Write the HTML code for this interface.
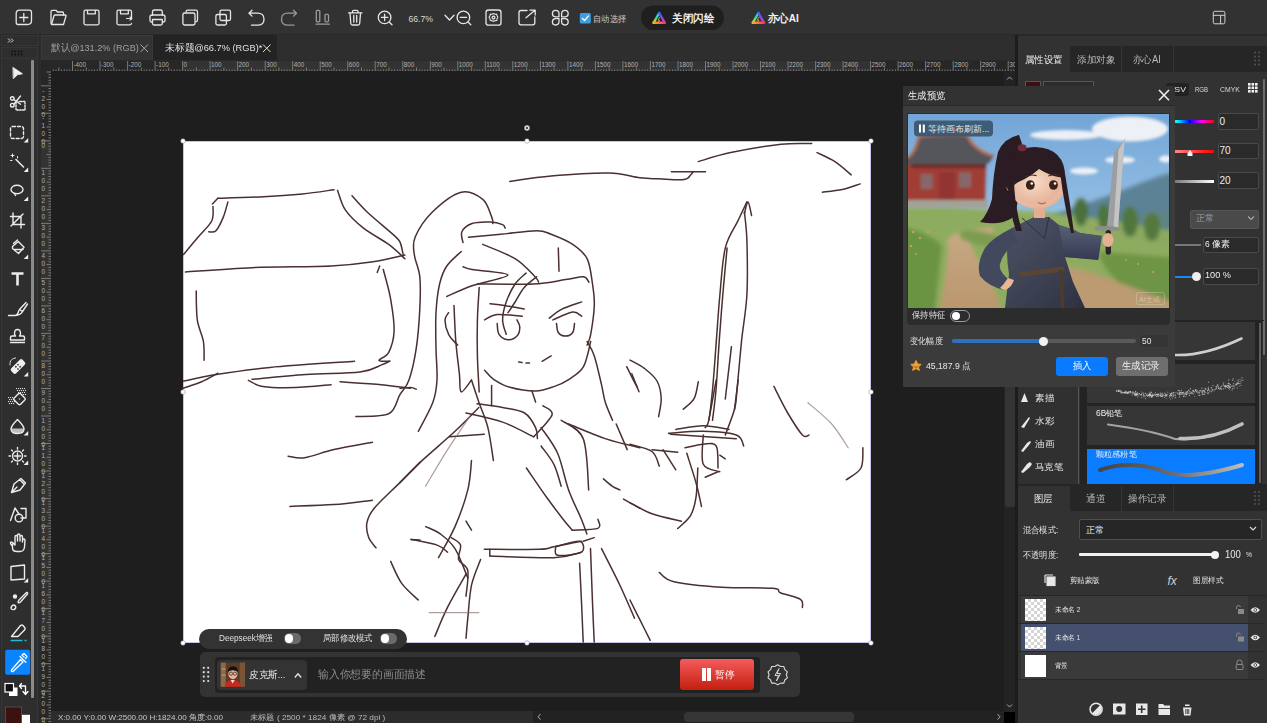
<!DOCTYPE html>
<html><head><meta charset="utf-8">
<style>
*{margin:0;padding:0;box-sizing:border-box}
html,body{width:1267px;height:723px;overflow:hidden;background:#1e1e1e;font-family:"Liberation Sans",sans-serif;color:#ddd}
.a{position:absolute}
svg{position:absolute;overflow:visible}
.t{position:absolute;white-space:nowrap;line-height:1}
</style></head><body>
<!-- TOP BAR -->
<div class="a" style="left:0;top:0;width:1267px;height:35px;background:#323232;border-bottom:1px solid #282828"></div>
<svg class="a" style="left:0;top:0" width="1267" height="35"><g fill="none" stroke="#e6e6e6" stroke-width="1.3" stroke-linecap="round" stroke-linejoin="round">
<path d="M19.5 10.2H29.5Q31.5 10.2 31.5 12.5V20.5Q31.5 24.5 27.5 24.5H18Q16.2 24.5 16.2 22.5V13.5Q16.2 10.2 19.5 10.2Z"/>
<path d="M23.8 13.5V21.5M19.8 17.5H27.8"/>
<path d="M51 23.5V11.5Q51 10.3 52.2 10.3H56L57.5 12H62.5Q63.5 12 63.5 13V15"/>
<path d="M51.5 24.5L54 15.8Q54.3 15 55.2 15H65.2Q66.3 15 66 16L63.5 24.5Z"/>
<path d="M85.5 10.2H97.5Q99 10.2 99 11.7V23.3Q99 24.8 97.5 24.8H85.5Q84 24.8 84 23.3V11.7Q84 10.2 85.5 10.2Z"/>
<path d="M87.5 10.5V13.8H95.3V10.5"/>
<path d="M131.5 19V11.7Q131.5 10.2 130 10.2H118.5Q117 10.2 117 11.7V23.3Q117 24.8 118.5 24.8H130Q131.5 24.8 131.5 23.3"/>
<path d="M120.5 10.5V13.8H128.3V10.5"/>
<path d="M126.5 18.5H131.8M130 16.8L131.8 18.5L130 20.2" stroke-width="1.1"/>
<path d="M152.5 15V11.8Q152.5 10 154.3 10H160.5Q162.3 10 162.3 11.8V15"/>
<path d="M152.5 22H151.5Q150 22 150 20.5V17Q150 15 152 15H163Q165 15 165 17V20.5Q165 22 163.5 22H162.5"/>
<path d="M152.5 19.5H162.3V23.5Q162.3 25 160.8 25H154Q152.5 25 152.5 23.5Z"/>
<path d="M186 12Q186 10.2 187.8 10.2H195.7Q197.5 10.2 197.5 12V20Q197.5 21.8 195.7 21.8"/>
<path d="M184.7 13H193.2Q195 13 195 14.8V23.2Q195 25 193.2 25H184.7Q182.9 25 182.9 23.2V14.8Q182.9 13 184.7 13Z"/>
<path d="M221.5 10.2H229Q230.5 10.2 230.5 11.7V19Q230.5 20.5 229 20.5H221.5Q220 20.5 220 19V11.7Q220 10.2 221.5 10.2Z"/>
<path d="M217.4 14.5H224.9Q226.4 14.5 226.4 16V23.5Q226.4 25 224.9 25H217.4Q215.9 25 215.9 23.5V16Q215.9 14.5 217.4 14.5Z"/>
<path d="M252 10.3L249 13.2L252 16.1M249.2 13.2H257.5Q264 13.2 264 19.2Q264 25.2 257.5 25.2H251.5"/>
</g>
<g fill="none" stroke="#9a9a9a" stroke-width="1.3" stroke-linecap="round" stroke-linejoin="round">
<path d="M293.5 10.3L296.5 13.2L293.5 16.1M296.3 13.2H288Q281.5 13.2 281.5 19.2Q281.5 25.2 288 25.2H294"/>
<rect x="316.3" y="10.3" width="3.5" height="11.5" rx="1"/>
<rect x="325" y="14.3" width="3.5" height="7.5" rx="1"/>
<path d="M316 24.2H329.3"/>
</g>
<g fill="none" stroke="#e6e6e6" stroke-width="1.3" stroke-linecap="round" stroke-linejoin="round">
<path d="M348.5 12.8H362M352.5 12.5V11.5Q352.5 10.3 353.7 10.3H356.8Q358 10.3 358 11.5V12.5"/>
<path d="M350 13.2L350.8 23.5Q351 25 352.5 25H358Q359.5 25 359.7 23.5L360.5 13.2"/>
<path d="M353.8 15.5V22.2M356.7 15.5V22.2"/>
<circle cx="384.6" cy="17.4" r="6.3"/>
<path d="M384.6 14.2V20.6M381.4 17.4H387.8M389.2 22L392 24.8"/>
</g>
<text x="408.4" y="21.8" font-family="Liberation Sans" font-size="9" textLength="24.5" lengthAdjust="spacingAndGlyphs" fill="#d8d8d8">66.7%</text>
<g fill="none" stroke="#e6e6e6" stroke-width="1.3" stroke-linecap="round" stroke-linejoin="round">
<path d="M445 15.2L449.5 20L454 15.2"/>
<circle cx="463.4" cy="17.4" r="6.3"/>
<path d="M460.2 17.4H466.6M468 22L470.8 24.8"/>
<rect x="486" y="10" width="15" height="15.2" rx="2.5"/>
<circle cx="493.5" cy="17.6" r="1.4"/>
<path d="M493.5 13.5L495 14.3L496.7 14.1L497 15.8L498 17.3L497 18.8L496.8 20.5L495 20.6L493.5 21.5L492 20.6L490.2 20.5L490 18.8L489 17.3L490 15.8L490.3 14.1L492 14.3Z" stroke-width="1.1"/>
<path d="M527 10.5H521Q519 10.5 519 12.5V22.8Q519 24.8 521 24.8H532.8Q534.8 24.8 534.8 22.8V17"/>
<path d="M526 17.8L535 10.3M530 10.2H535.2V15"/>
<path d="M559 16.8H555.4Q552.4 16.8 552.4 13.6Q552.4 10.4 555.6 10.4Q559 10.4 559 13.8Z"/>
<path d="M561.6 16.8H565.2Q568.2 16.8 568.2 13.6Q568.2 10.4 565 10.4Q561.6 10.4 561.6 13.8Z"/>
<path d="M559 18.6H555.4Q552.4 18.6 552.4 21.8Q552.4 25 555.6 25Q559 25 559 21.6Z"/>
<path d="M561.6 18.6H565.2Q568.2 18.6 568.2 21.8Q568.2 25 565 25Q561.6 25 561.6 21.6Z"/>
</g>
<rect x="579.8" y="13" width="11" height="10.5" rx="1.5" fill="#3f9ee0"/>
<path d="M582.2 18.3L584.6 20.5L588.5 15.8" fill="none" stroke="#fff" stroke-width="1.2" stroke-linecap="round" stroke-linejoin="round"/>
<text x="593.2" y="21.6" font-family="Liberation Sans" font-size="8.5" textLength="33.2" lengthAdjust="spacingAndGlyphs" fill="#c8c8c8">自动选择</text>
<rect x="641" y="5.4" width="83" height="24.6" rx="12.3" fill="#1f1f1f"/>
<defs>
<linearGradient id="lg1" x1="0" y1="0" x2="1" y2="1">
<stop offset="0" stop-color="#2bd4ff"/><stop offset="0.35" stop-color="#7a5cff"/><stop offset="0.65" stop-color="#ff3dd0"/><stop offset="1" stop-color="#ffb020"/></linearGradient>
</defs>

<defs>
<linearGradient id="lgL" x1="0" y1="0" x2="0" y2="1"><stop offset="0" stop-color="#20c8ff"/><stop offset="0.5" stop-color="#30e090"/><stop offset="1" stop-color="#ffd020"/></linearGradient>
<linearGradient id="lgR" x1="0" y1="0" x2="0" y2="1"><stop offset="0" stop-color="#4060ff"/><stop offset="1" stop-color="#e030d0"/></linearGradient>
<linearGradient id="lgB" gradientUnits="userSpaceOnUse" x1="653" y1="0" x2="665" y2="0"><stop offset="0" stop-color="#ffb020"/><stop offset="1" stop-color="#ff3060"/></linearGradient>
</defs><g transform="translate(0 0)">
<path d="M659.2 13L653.6 22.8" stroke="url(#lgL)" stroke-width="2.4" stroke-linecap="round" fill="none"/>
<path d="M659.2 13L664.8 22.8" stroke="url(#lgR)" stroke-width="2.4" stroke-linecap="round" fill="none"/>
<path d="M653.6 22.8H664.8" stroke="url(#lgB)" stroke-width="2.4" stroke-linecap="round" fill="none"/>
<path d="M659.8 17L658 20.2H659.6L658.6 22" stroke="#ffcf40" stroke-width="0.7" fill="none"/>
</g><g transform="translate(99.2 0)">
<path d="M659.2 13L653.6 22.8" stroke="url(#lgL)" stroke-width="2.4" stroke-linecap="round" fill="none"/>
<path d="M659.2 13L664.8 22.8" stroke="url(#lgR)" stroke-width="2.4" stroke-linecap="round" fill="none"/>
<path d="M653.6 22.8H664.8" stroke="url(#lgB)" stroke-width="2.4" stroke-linecap="round" fill="none"/>
<path d="M659.8 17L658 20.2H659.6L658.6 22" stroke="#ffcf40" stroke-width="0.7" fill="none"/>
</g>
<text x="672" y="22.3" font-family="Liberation Sans" font-size="10.6" font-weight="bold" textLength="42.2" lengthAdjust="spacingAndGlyphs" fill="#f2f2f2">关闭闪绘</text>

<text x="768" y="22.3" font-family="Liberation Sans" font-size="10.6" font-weight="bold" textLength="30.8" lengthAdjust="spacingAndGlyphs" fill="#f2f2f2">亦心AI</text>
<g fill="none" stroke="#d0d0d0" stroke-width="1">
<rect x="1213.3" y="11.3" width="11.6" height="12.5" rx="1.5"/>
<path d="M1213.3 15.3H1224.9M1220.6 15.3V23.8"/>
</g>
</svg>

<!-- LEFT TOOLBAR -->
<div class="a" style="left:0;top:35px;width:41px;height:688px;background:#2b2b2b"></div>
<div class="a" style="left:1px;top:35px;width:38px;height:11px;background:#2e2e2e;border:1px solid #363636"></div>
<div class="a" style="left:1px;top:47px;width:37px;height:12px;background:#2e2e2e;border:1px solid #363636"></div>
<div class="a" style="left:1px;top:59px;width:37px;height:664px;background:#2e2e2e;border-left:1px solid #363636;border-right:1px solid #363636"></div>
<div class="a" style="left:31px;top:60px;width:2.5px;height:638px;background:#8a8a8a;border-radius:1px"></div>

<svg class="a" style="left:0;top:0" width="41" height="723"><g fill="none" stroke="#ececec" stroke-width="1.4" stroke-linecap="round" stroke-linejoin="round">
<path d="M13.2 67.5L22.5 73.8L17.5 74.8L13.5 78.5Z" fill="#f0f0f0" stroke-width="0.8"/>
<circle cx="12.3" cy="98.5" r="1.8"/><circle cx="12.3" cy="105.2" r="1.8"/>
<path d="M13.8 99.5L20.5 104.2M13.8 104.2L20.5 96"/>
<path d="M16 102.5V110H25V101.5H19" stroke-dasharray="1.5 1.3"/>
<rect x="10.5" y="126.5" width="13" height="12" rx="2" stroke-dasharray="3 2"/>
<path d="M16 159.5L23.5 167" stroke-width="1.6"/>
<path d="M12.5 154V157M11 155.5H14M17.5 156.5V158M10.5 160.5H12" stroke-width="1"/>
<ellipse cx="17" cy="189.5" rx="6" ry="4.3"/>
<path d="M14 193L15.5 195.5"/>
<path d="M13 213V224.5H24.5M10.5 216.5H21V228M23 214L11 226" />
<path d="M12.5 246.5L18.3 241.5L24 247.2L18.5 253.5L12.5 248.5Z"/>
<path d="M13.5 243.5L17.5 240"/>
<path d="M14.5 249.5H23" stroke-dasharray="1 1"/>
<path d="M11.5 273.5H23.5M17.5 273.5V285.5" stroke-width="2.6" stroke-linecap="butt"/>
<path d="M8.5 315.5H15M15 315.5Q17.5 315.5 18.5 311.5L19.5 309.5L22.5 311.5Q21 315 15 315.5M19.5 309.5L26 302.5M22.5 311.5L27.5 304"/>
<path d="M14.5 333.5Q14.5 329.5 17.5 329.5Q20.5 329.5 20.5 333.5Q20.5 335 19.5 336H23Q24.5 336 24.5 337.5V340H10.5V337.5Q10.5 336 12 336H15.5Q14.5 335 14.5 333.5Z"/>
<path d="M10.5 342.5H24.5"/>
<rect x="10" y="363" width="16" height="7" rx="2" transform="rotate(-45 18 366.5)" fill="#f0f0f0" stroke="none"/>
<g fill="#2b2b2b" stroke="none" transform="rotate(-45 18 366.5)"><rect x="15.5" y="364.5" width="1.5" height="1.5"/><rect x="18.5" y="364.5" width="1.5" height="1.5"/><rect x="15.5" y="367.5" width="1.5" height="1.5"/><rect x="18.5" y="367.5" width="1.5" height="1.5"/></g>
<path d="M10 365Q9.5 359 15.5 358" stroke-dasharray="1.2 1" stroke-width="1"/>
<g fill="#dcdcdc" stroke="none"><rect x="16" y="388" width="1.1" height="1.1"/><rect x="18" y="388" width="1.1" height="1.1"/><rect x="20" y="388" width="1.1" height="1.1"/><rect x="22" y="388" width="1.1" height="1.1"/><rect x="24" y="388" width="1.1" height="1.1"/><rect x="17" y="390" width="1.1" height="1.1"/><rect x="19" y="390" width="1.1" height="1.1"/><rect x="21" y="390" width="1.1" height="1.1"/><rect x="23" y="390" width="1.1" height="1.1"/><rect x="25" y="390" width="1.1" height="1.1"/><rect x="18" y="392" width="1.1" height="1.1"/><rect x="20" y="392" width="1.1" height="1.1"/><rect x="22" y="392" width="1.1" height="1.1"/><rect x="24" y="392" width="1.1" height="1.1"/><rect x="23" y="394" width="1.1" height="1.1"/><rect x="25" y="394" width="1.1" height="1.1"/><rect x="8" y="397" width="1.1" height="1.1"/><rect x="10" y="397" width="1.1" height="1.1"/><rect x="12" y="397" width="1.1" height="1.1"/><rect x="9" y="399" width="1.1" height="1.1"/><rect x="11" y="399" width="1.1" height="1.1"/><rect x="13" y="399" width="1.1" height="1.1"/><rect x="8" y="401" width="1.1" height="1.1"/><rect x="10" y="401" width="1.1" height="1.1"/><rect x="12" y="401" width="1.1" height="1.1"/><rect x="14" y="401" width="1.1" height="1.1"/><rect x="9" y="403" width="1.1" height="1.1"/><rect x="11" y="403" width="1.1" height="1.1"/><rect x="13" y="403" width="1.1" height="1.1"/></g>
<rect x="15" y="394.5" width="9" height="9" rx="1.5" transform="rotate(45 19.5 399)" fill="#2e2e2e"/>
<path d="M19.5 399L19.5 399"/>
<path d="M11.3 428.5Q11 432.5 17.5 433.5Q24 432.5 23.7 428.5Z" fill="#bdbdbd" stroke="none"/>
<path d="M17.5 419.5Q24 426 24 429Q24 433.5 17.5 433.5Q11 433.5 11 429Q11 426 17.5 419.5Z"/>
<circle cx="17.5" cy="456" r="5"/>
<path d="M17.5 453V459M14.5 456H20.5M17.5 447.5V449M17.5 463V464.5M9 456H10.5M24.5 456H26M11.5 450L12.5 451M22.5 461L23.5 462M23.5 450L22.5 451M11.5 462L12.5 461"/>
<path d="M11.5 492.5L14 484L21 478.5L25.5 483L20 490Z M11.5 492.5L17 487 M19.5 479.5L24 484"/>
<path d="M10.5 520.5L15 508L19 514M21 508.5H26V518H21"/>
<circle cx="19" cy="518" r="3.8"/>
<path d="M12.5 544V548Q12.5 551.5 17 551.5H20Q24 551.5 24.5 547L25 540.5Q25 539 23.8 539Q22.5 539 22.5 540.5V542V537Q22.5 535.5 21.2 535.5Q20 535.5 20 537V541V535.5Q20 534 18.7 534Q17.5 534 17.5 535.5V541V537Q17.5 535.5 16.2 535.5Q15 535.5 15 537V545L12.5 542.5Q11 541.5 10.5 542.5Q10 543.5 12.5 546"/>
<path d="M11 566.5L24.5 565V579L11 580Z"/>
<path d="M19 600L26.5 592.5Q28 592 27.5 594L20.5 602Q18.5 603.5 18 602Z"/>
<path d="M12 606Q13.5 604 15.5 606Q16.5 608.5 14 609.5Q11 610 11 607.5Z"/>
<circle cx="15" cy="596.5" r="1.5" fill="#ececec"/>
<path d="M11.5 636.5L20.5 625.5Q22 624.5 23 625.5L25 628Q25.5 629 24.5 630L18 636.5Z M11.5 636.5H18"/>
</g>
<path d="M10.5 640.5H22.5M24.5 640.5H26.5" stroke="#21b8d8" stroke-width="1.6"/>
<g fill="#f0f0f0">
<path d="M28.2 138V142.5H23.7Z"/>
<path d="M28.2 167.5V172H23.7Z"/>
<path d="M28.2 196.5V201H23.7Z"/>
<path d="M28.2 254.5V259H23.7Z"/>
<path d="M28.2 372V376.5H23.7Z"/>
<path d="M28.2 431V435.5H23.7Z"/>
<path d="M28.2 460.5V465H23.7Z"/>
<path d="M28.2 578V582.5H23.7Z"/>
</g>
<rect x="5.2" y="649.8" width="25" height="25" rx="2" fill="#0a84ff"/>
<g fill="none" stroke="#fff" stroke-width="1.3" stroke-linecap="round" stroke-linejoin="round">
<path d="M11.5 670L20.5 659.5L23 662L13 671.5Q11 672 11.5 670Z"/>
<path d="M20 656.5L25.8 662.3M24 657L22 655L24 653.5L27 656.5L25.5 658.5"/>
</g>
<rect x="9" y="687.5" width="8.5" height="8.5" fill="#fff"/>
<rect x="5" y="683.5" width="8.5" height="8.5" fill="#111" stroke="#fff" stroke-width="1.2"/>
<path d="M21.5 683.5L19.5 686L21.5 688.5M19.8 686H25.5V694M23 691.5L25.5 694.5L28 691.5" fill="none" stroke="#fff" stroke-width="1.3" stroke-linecap="round" stroke-linejoin="round"/>
<rect x="21.5" y="714.8" width="8.5" height="8.5" fill="#fff"/>
<rect x="5.5" y="707" width="16" height="16.5" fill="#3a1212" stroke="#555" stroke-width="0.8"/>
<g fill="#111"><circle cx="12" cy="51.5" r="0.9"/><circle cx="15.2" cy="51.5" r="0.9"/><circle cx="18.4" cy="51.5" r="0.9"/><circle cx="21.6" cy="51.5" r="0.9"/><circle cx="12" cy="54.5" r="0.9"/><circle cx="15.2" cy="54.5" r="0.9"/><circle cx="18.4" cy="54.5" r="0.9"/><circle cx="21.6" cy="54.5" r="0.9"/></g>
<path d="M8 38.5L10 40.5L8 42.5M11 38.5L13 40.5L11 42.5" fill="none" stroke="#ddd" stroke-width="1"/>
</svg>
<!-- TABS -->
<div class="a" style="left:41px;top:35px;width:974px;height:25px;background:#2e2e2e"></div>
<div class="a" style="left:41px;top:35px;width:112px;height:25px;background:#333;border:1px solid #3a3a3a;border-bottom:none"></div>
<div class="a" style="left:153px;top:35px;width:124px;height:25px;background:#232323"></div>
<div class="t" style="left:51px;top:42.5px;font-size:9.5px;color:#a0a0a0;transform:scaleX(0.960);transform-origin:0 0">默认@131.2% (RGB)</div>
<div class="t" style="left:165px;top:42.5px;font-size:9.5px;color:#e0e0e0;transform:scaleX(0.975);transform-origin:0 0">未标题@66.7% (RGB)*</div>
<svg class="a" style="left:0;top:0" width="300" height="60"><path d="M140.5 44.5L148 52M148 44.5L140.5 52" stroke="#a8a8a8" stroke-width="1"/><path d="M263 44.5L270.5 52M270.5 44.5L263 52" stroke="#e0e0e0" stroke-width="1"/></svg>

<!-- RULERS -->
<div class="a" style="left:41px;top:60px;width:974px;height:11px;background:#2a2a2a"></div>
<div class="a" style="left:41px;top:71px;width:10px;height:652px;background:#2a2a2a"></div>
<div class="a" style="left:42px;top:61px;width:9px;height:10px;background:#262626;border:1px solid #363636"></div>
<svg id="rulers" class="a" style="left:0;top:0" width="1267" height="723"><defs><clipPath id="rclip"><rect x="41" y="60" width="974" height="663"/></clipPath></defs><g clip-path="url(#rclip)"><rect x="41" y="61" width="974" height="10" fill="#272727"/><rect x="182.6" y="61" width="688.0" height="10" fill="#333"/><rect x="41" y="71" width="10" height="652" fill="#272727"/><rect x="41" y="141" width="10" height="502.0" fill="#333"/><path d="M53.3 69.5V71M56.0 69.5V71M58.8 67.5V71M61.5 69.5V71M64.3 69.5V71M67.0 69.5V71M69.8 69.5V71M72.5 61V71M75.3 69.5V71M78.0 69.5V71M80.8 69.5V71M83.5 69.5V71M86.3 67.5V71M89.0 69.5V71M91.8 69.5V71M94.5 69.5V71M97.3 69.5V71M100.0 61V71M102.8 69.5V71M105.5 69.5V71M108.3 69.5V71M111.0 69.5V71M113.8 67.5V71M116.6 69.5V71M119.3 69.5V71M122.1 69.5V71M124.8 69.5V71M127.6 61V71M130.3 69.5V71M133.1 69.5V71M135.8 69.5V71M138.6 69.5V71M141.3 67.5V71M144.1 69.5V71M146.8 69.5V71M149.6 69.5V71M152.3 69.5V71M155.1 61V71M157.8 69.5V71M160.6 69.5V71M163.3 69.5V71M166.1 69.5V71M168.8 67.5V71M171.6 69.5V71M174.3 69.5V71M177.1 69.5V71M179.8 69.5V71M182.6 61V71M185.4 69.5V71M188.1 69.5V71M190.9 69.5V71M193.6 69.5V71M196.4 67.5V71M199.1 69.5V71M201.9 69.5V71M204.6 69.5V71M207.4 69.5V71M210.1 61V71M212.9 69.5V71M215.6 69.5V71M218.4 69.5V71M221.1 69.5V71M223.9 67.5V71M226.6 69.5V71M229.4 69.5V71M232.1 69.5V71M234.9 69.5V71M237.6 61V71M240.4 69.5V71M243.1 69.5V71M245.9 69.5V71M248.6 69.5V71M251.4 67.5V71M254.2 69.5V71M256.9 69.5V71M259.7 69.5V71M262.4 69.5V71M265.2 61V71M267.9 69.5V71M270.7 69.5V71M273.4 69.5V71M276.2 69.5V71M278.9 67.5V71M281.7 69.5V71M284.4 69.5V71M287.2 69.5V71M289.9 69.5V71M292.7 61V71M295.4 69.5V71M298.2 69.5V71M300.9 69.5V71M303.7 69.5V71M306.4 67.5V71M309.2 69.5V71M311.9 69.5V71M314.7 69.5V71M317.4 69.5V71M320.2 61V71M323.0 69.5V71M325.7 69.5V71M328.5 69.5V71M331.2 69.5V71M334.0 67.5V71M336.7 69.5V71M339.5 69.5V71M342.2 69.5V71M345.0 69.5V71M347.7 61V71M350.5 69.5V71M353.2 69.5V71M356.0 69.5V71M358.7 69.5V71M361.5 67.5V71M364.2 69.5V71M367.0 69.5V71M369.7 69.5V71M372.5 69.5V71M375.2 61V71M378.0 69.5V71M380.7 69.5V71M383.5 69.5V71M386.2 69.5V71M389.0 67.5V71M391.8 69.5V71M394.5 69.5V71M397.3 69.5V71M400.0 69.5V71M402.8 61V71M405.5 69.5V71M408.3 69.5V71M411.0 69.5V71M413.8 69.5V71M416.5 67.5V71M419.3 69.5V71M422.0 69.5V71M424.8 69.5V71M427.5 69.5V71M430.3 61V71M433.0 69.5V71M435.8 69.5V71M438.5 69.5V71M441.3 69.5V71M444.0 67.5V71M446.8 69.5V71M449.5 69.5V71M452.3 69.5V71M455.0 69.5V71M457.8 61V71M460.6 69.5V71M463.3 69.5V71M466.1 69.5V71M468.8 69.5V71M471.6 67.5V71M474.3 69.5V71M477.1 69.5V71M479.8 69.5V71M482.6 69.5V71M485.3 61V71M488.1 69.5V71M490.8 69.5V71M493.6 69.5V71M496.3 69.5V71M499.1 67.5V71M501.8 69.5V71M504.6 69.5V71M507.3 69.5V71M510.1 69.5V71M512.8 61V71M515.6 69.5V71M518.3 69.5V71M521.1 69.5V71M523.8 69.5V71M526.6 67.5V71M529.4 69.5V71M532.1 69.5V71M534.9 69.5V71M537.6 69.5V71M540.4 61V71M543.1 69.5V71M545.9 69.5V71M548.6 69.5V71M551.4 69.5V71M554.1 67.5V71M556.9 69.5V71M559.6 69.5V71M562.4 69.5V71M565.1 69.5V71M567.9 61V71M570.6 69.5V71M573.4 69.5V71M576.1 69.5V71M578.9 69.5V71M581.6 67.5V71M584.4 69.5V71M587.1 69.5V71M589.9 69.5V71M592.6 69.5V71M595.4 61V71M598.2 69.5V71M600.9 69.5V71M603.7 69.5V71M606.4 69.5V71M609.2 67.5V71M611.9 69.5V71M614.7 69.5V71M617.4 69.5V71M620.2 69.5V71M622.9 61V71M625.7 69.5V71M628.4 69.5V71M631.2 69.5V71M633.9 69.5V71M636.7 67.5V71M639.4 69.5V71M642.2 69.5V71M644.9 69.5V71M647.7 69.5V71M650.4 61V71M653.2 69.5V71M655.9 69.5V71M658.7 69.5V71M661.4 69.5V71M664.2 67.5V71M667.0 69.5V71M669.7 69.5V71M672.5 69.5V71M675.2 69.5V71M678.0 61V71M680.7 69.5V71M683.5 69.5V71M686.2 69.5V71M689.0 69.5V71M691.7 67.5V71M694.5 69.5V71M697.2 69.5V71M700.0 69.5V71M702.7 69.5V71M705.5 61V71M708.2 69.5V71M711.0 69.5V71M713.7 69.5V71M716.5 69.5V71M719.2 67.5V71M722.0 69.5V71M724.7 69.5V71M727.5 69.5V71M730.2 69.5V71M733.0 61V71M735.8 69.5V71M738.5 69.5V71M741.3 69.5V71M744.0 69.5V71M746.8 67.5V71M749.5 69.5V71M752.3 69.5V71M755.0 69.5V71M757.8 69.5V71M760.5 61V71M763.3 69.5V71M766.0 69.5V71M768.8 69.5V71M771.5 69.5V71M774.3 67.5V71M777.0 69.5V71M779.8 69.5V71M782.5 69.5V71M785.3 69.5V71M788.0 61V71M790.8 69.5V71M793.5 69.5V71M796.3 69.5V71M799.0 69.5V71M801.8 67.5V71M804.6 69.5V71M807.3 69.5V71M810.1 69.5V71M812.8 69.5V71M815.6 61V71M818.3 69.5V71M821.1 69.5V71M823.8 69.5V71M826.6 69.5V71M829.3 67.5V71M832.1 69.5V71M834.8 69.5V71M837.6 69.5V71M840.3 69.5V71M843.1 61V71M845.8 69.5V71M848.6 69.5V71M851.3 69.5V71M854.1 69.5V71M856.8 67.5V71M859.6 69.5V71M862.3 69.5V71M865.1 69.5V71M867.8 69.5V71M870.6 61V71M873.4 69.5V71M876.1 69.5V71M878.9 69.5V71M881.6 69.5V71M884.4 67.5V71M887.1 69.5V71M889.9 69.5V71M892.6 69.5V71M895.4 69.5V71M898.1 61V71M900.9 69.5V71M903.6 69.5V71M906.4 69.5V71M909.1 69.5V71M911.9 67.5V71M914.6 69.5V71M917.4 69.5V71M920.1 69.5V71M922.9 69.5V71M925.6 61V71M928.4 69.5V71M931.1 69.5V71M933.9 69.5V71M936.6 69.5V71M939.4 67.5V71M942.2 69.5V71M944.9 69.5V71M947.7 69.5V71M950.4 69.5V71M953.2 61V71M955.9 69.5V71M958.7 69.5V71M961.4 69.5V71M964.2 69.5V71M966.9 67.5V71M969.7 69.5V71M972.4 69.5V71M975.2 69.5V71M977.9 69.5V71M980.7 61V71M983.4 69.5V71M986.2 69.5V71M988.9 69.5V71M991.7 69.5V71M994.4 67.5V71M997.2 69.5V71M999.9 69.5V71M1002.7 69.5V71M1005.4 69.5V71M1008.2 61V71M1011.0 69.5V71M1013.7 69.5V71M46.5 72.0H51M48.5 74.8H51M48.5 77.5H51M48.5 80.3H51M48.5 83.0H51M41 85.8H51M48.5 88.5H51M48.5 91.3H51M48.5 94.0H51M48.5 96.8H51M46.5 99.5H51M48.5 102.3H51M48.5 105.0H51M48.5 107.8H51M48.5 110.5H51M41 113.3H51M48.5 116.0H51M48.5 118.8H51M48.5 121.5H51M48.5 124.3H51M46.5 127.0H51M48.5 129.8H51M48.5 132.5H51M48.5 135.3H51M48.5 138.0H51M41 140.8H51M48.5 143.6H51M48.5 146.3H51M48.5 149.1H51M48.5 151.8H51M46.5 154.6H51M48.5 157.3H51M48.5 160.1H51M48.5 162.8H51M48.5 165.6H51M41 168.3H51M48.5 171.1H51M48.5 173.8H51M48.5 176.6H51M48.5 179.3H51M46.5 182.1H51M48.5 184.8H51M48.5 187.6H51M48.5 190.3H51M48.5 193.1H51M41 195.8H51M48.5 198.6H51M48.5 201.3H51M48.5 204.1H51M48.5 206.8H51M46.5 209.6H51M48.5 212.4H51M48.5 215.1H51M48.5 217.9H51M48.5 220.6H51M41 223.4H51M48.5 226.1H51M48.5 228.9H51M48.5 231.6H51M48.5 234.4H51M46.5 237.1H51M48.5 239.9H51M48.5 242.6H51M48.5 245.4H51M48.5 248.1H51M41 250.9H51M48.5 253.6H51M48.5 256.4H51M48.5 259.1H51M48.5 261.9H51M46.5 264.6H51M48.5 267.4H51M48.5 270.1H51M48.5 272.9H51M48.5 275.6H51M41 278.4H51M48.5 281.2H51M48.5 283.9H51M48.5 286.7H51M48.5 289.4H51M46.5 292.2H51M48.5 294.9H51M48.5 297.7H51M48.5 300.4H51M48.5 303.2H51M41 305.9H51M48.5 308.7H51M48.5 311.4H51M48.5 314.2H51M48.5 316.9H51M46.5 319.7H51M48.5 322.4H51M48.5 325.2H51M48.5 327.9H51M48.5 330.7H51M41 333.4H51M48.5 336.2H51M48.5 338.9H51M48.5 341.7H51M48.5 344.4H51M46.5 347.2H51M48.5 350.0H51M48.5 352.7H51M48.5 355.5H51M48.5 358.2H51M41 361.0H51M48.5 363.7H51M48.5 366.5H51M48.5 369.2H51M48.5 372.0H51M46.5 374.7H51M48.5 377.5H51M48.5 380.2H51M48.5 383.0H51M48.5 385.7H51M41 388.5H51M48.5 391.2H51M48.5 394.0H51M48.5 396.7H51M48.5 399.5H51M46.5 402.2H51M48.5 405.0H51M48.5 407.7H51M48.5 410.5H51M48.5 413.2H51M41 416.0H51M48.5 418.8H51M48.5 421.5H51M48.5 424.3H51M48.5 427.0H51M46.5 429.8H51M48.5 432.5H51M48.5 435.3H51M48.5 438.0H51M48.5 440.8H51M41 443.5H51M48.5 446.3H51M48.5 449.0H51M48.5 451.8H51M48.5 454.5H51M46.5 457.3H51M48.5 460.0H51M48.5 462.8H51M48.5 465.5H51M48.5 468.3H51M41 471.0H51M48.5 473.8H51M48.5 476.5H51M48.5 479.3H51M48.5 482.0H51M46.5 484.8H51M48.5 487.6H51M48.5 490.3H51M48.5 493.1H51M48.5 495.8H51M41 498.6H51M48.5 501.3H51M48.5 504.1H51M48.5 506.8H51M48.5 509.6H51M46.5 512.3H51M48.5 515.1H51M48.5 517.8H51M48.5 520.6H51M48.5 523.3H51M41 526.1H51M48.5 528.8H51M48.5 531.6H51M48.5 534.3H51M48.5 537.1H51M46.5 539.8H51M48.5 542.6H51M48.5 545.3H51M48.5 548.1H51M48.5 550.8H51M41 553.6H51M48.5 556.4H51M48.5 559.1H51M48.5 561.9H51M48.5 564.6H51M46.5 567.4H51M48.5 570.1H51M48.5 572.9H51M48.5 575.6H51M48.5 578.4H51M41 581.1H51M48.5 583.9H51M48.5 586.6H51M48.5 589.4H51M48.5 592.1H51M46.5 594.9H51M48.5 597.6H51M48.5 600.4H51M48.5 603.1H51M48.5 605.9H51M41 608.6H51M48.5 611.4H51M48.5 614.1H51M48.5 616.9H51M48.5 619.6H51M46.5 622.4H51M48.5 625.2H51M48.5 627.9H51M48.5 630.7H51M48.5 633.4H51M41 636.2H51M48.5 638.9H51M48.5 641.7H51M48.5 644.4H51M48.5 647.2H51M46.5 649.9H51M48.5 652.7H51M48.5 655.4H51M48.5 658.2H51M48.5 660.9H51M41 663.7H51M48.5 666.4H51M48.5 669.2H51M48.5 671.9H51M48.5 674.7H51M46.5 677.4H51M48.5 680.2H51M48.5 682.9H51M48.5 685.7H51M48.5 688.4H51M41 691.2H51M48.5 694.0H51M48.5 696.7H51M48.5 699.5H51M48.5 702.2H51M46.5 705.0H51M48.5 707.7H51M48.5 710.5H51M48.5 713.2H51M48.5 716.0H51M41 718.7H51M48.5 721.5H51" stroke="#7a7a7a" stroke-width="1" fill="none"/><g font-family="Liberation Sans" font-size="6.3" fill="#b0b0b0"><text x="73.5" y="67.3">-400</text><text x="101.0" y="67.3">-300</text><text x="128.6" y="67.3">-200</text><text x="156.1" y="67.3">-100</text><text x="183.6" y="67.3">0</text><text x="211.1" y="67.3">100</text><text x="238.6" y="67.3">200</text><text x="266.2" y="67.3">300</text><text x="293.7" y="67.3">400</text><text x="321.2" y="67.3">500</text><text x="348.7" y="67.3">600</text><text x="376.2" y="67.3">700</text><text x="403.8" y="67.3">800</text><text x="431.3" y="67.3">900</text><text x="458.8" y="67.3">1000</text><text x="486.3" y="67.3">1100</text><text x="513.8" y="67.3">1200</text><text x="541.4" y="67.3">1300</text><text x="568.9" y="67.3">1400</text><text x="596.4" y="67.3">1500</text><text x="623.9" y="67.3">1600</text><text x="651.4" y="67.3">1700</text><text x="679.0" y="67.3">1800</text><text x="706.5" y="67.3">1900</text><text x="734.0" y="67.3">2000</text><text x="761.5" y="67.3">2100</text><text x="789.0" y="67.3">2200</text><text x="816.6" y="67.3">2300</text><text x="844.1" y="67.3">2400</text><text x="871.6" y="67.3">2500</text><text x="899.1" y="67.3">2600</text><text x="926.6" y="67.3">2700</text><text x="954.2" y="67.3">2800</text><text x="981.7" y="67.3">2900</text><text x="1009.2" y="67.3">3000</text><text x="43.3" y="92.6" text-anchor="middle">-</text><text x="43.3" y="100.6" text-anchor="middle">2</text><text x="43.3" y="108.6" text-anchor="middle">0</text><text x="43.3" y="116.6" text-anchor="middle">0</text><text x="43.3" y="120.1" text-anchor="middle">-</text><text x="43.3" y="128.1" text-anchor="middle">1</text><text x="43.3" y="136.1" text-anchor="middle">0</text><text x="43.3" y="144.1" text-anchor="middle">0</text><text x="43.3" y="147.6" text-anchor="middle">0</text><text x="43.3" y="175.1" text-anchor="middle">1</text><text x="43.3" y="183.1" text-anchor="middle">0</text><text x="43.3" y="191.1" text-anchor="middle">0</text><text x="43.3" y="202.6" text-anchor="middle">2</text><text x="43.3" y="210.6" text-anchor="middle">0</text><text x="43.3" y="218.6" text-anchor="middle">0</text><text x="43.3" y="230.2" text-anchor="middle">3</text><text x="43.3" y="238.2" text-anchor="middle">0</text><text x="43.3" y="246.2" text-anchor="middle">0</text><text x="43.3" y="257.7" text-anchor="middle">4</text><text x="43.3" y="265.7" text-anchor="middle">0</text><text x="43.3" y="273.7" text-anchor="middle">0</text><text x="43.3" y="285.2" text-anchor="middle">5</text><text x="43.3" y="293.2" text-anchor="middle">0</text><text x="43.3" y="301.2" text-anchor="middle">0</text><text x="43.3" y="312.7" text-anchor="middle">6</text><text x="43.3" y="320.7" text-anchor="middle">0</text><text x="43.3" y="328.7" text-anchor="middle">0</text><text x="43.3" y="340.2" text-anchor="middle">7</text><text x="43.3" y="348.2" text-anchor="middle">0</text><text x="43.3" y="356.2" text-anchor="middle">0</text><text x="43.3" y="367.8" text-anchor="middle">8</text><text x="43.3" y="375.8" text-anchor="middle">0</text><text x="43.3" y="383.8" text-anchor="middle">0</text><text x="43.3" y="395.3" text-anchor="middle">9</text><text x="43.3" y="403.3" text-anchor="middle">0</text><text x="43.3" y="411.3" text-anchor="middle">0</text><text x="43.3" y="422.8" text-anchor="middle">1</text><text x="43.3" y="430.8" text-anchor="middle">0</text><text x="43.3" y="438.8" text-anchor="middle">0</text><text x="43.3" y="446.8" text-anchor="middle">0</text><text x="43.3" y="450.3" text-anchor="middle">1</text><text x="43.3" y="458.3" text-anchor="middle">1</text><text x="43.3" y="466.3" text-anchor="middle">0</text><text x="43.3" y="474.3" text-anchor="middle">0</text><text x="43.3" y="477.8" text-anchor="middle">1</text><text x="43.3" y="485.8" text-anchor="middle">2</text><text x="43.3" y="493.8" text-anchor="middle">0</text><text x="43.3" y="501.8" text-anchor="middle">0</text><text x="43.3" y="505.4" text-anchor="middle">1</text><text x="43.3" y="513.4" text-anchor="middle">3</text><text x="43.3" y="521.4" text-anchor="middle">0</text><text x="43.3" y="529.4" text-anchor="middle">0</text><text x="43.3" y="532.9" text-anchor="middle">1</text><text x="43.3" y="540.9" text-anchor="middle">4</text><text x="43.3" y="548.9" text-anchor="middle">0</text><text x="43.3" y="556.9" text-anchor="middle">0</text><text x="43.3" y="560.4" text-anchor="middle">1</text><text x="43.3" y="568.4" text-anchor="middle">5</text><text x="43.3" y="576.4" text-anchor="middle">0</text><text x="43.3" y="584.4" text-anchor="middle">0</text><text x="43.3" y="587.9" text-anchor="middle">1</text><text x="43.3" y="595.9" text-anchor="middle">6</text><text x="43.3" y="603.9" text-anchor="middle">0</text><text x="43.3" y="611.9" text-anchor="middle">0</text><text x="43.3" y="615.4" text-anchor="middle">1</text><text x="43.3" y="623.4" text-anchor="middle">7</text><text x="43.3" y="631.4" text-anchor="middle">0</text><text x="43.3" y="639.4" text-anchor="middle">0</text><text x="43.3" y="643.0" text-anchor="middle">1</text><text x="43.3" y="651.0" text-anchor="middle">8</text><text x="43.3" y="659.0" text-anchor="middle">0</text><text x="43.3" y="667.0" text-anchor="middle">0</text><text x="43.3" y="670.5" text-anchor="middle">1</text><text x="43.3" y="678.5" text-anchor="middle">9</text><text x="43.3" y="686.5" text-anchor="middle">0</text><text x="43.3" y="694.5" text-anchor="middle">0</text><text x="43.3" y="698.0" text-anchor="middle">2</text><text x="43.3" y="706.0" text-anchor="middle">0</text><text x="43.3" y="714.0" text-anchor="middle">0</text><text x="43.3" y="722.0" text-anchor="middle">0</text><text x="43.3" y="725.5" text-anchor="middle">2</text><text x="43.3" y="733.5" text-anchor="middle">1</text><text x="43.3" y="741.5" text-anchor="middle">0</text><text x="43.3" y="749.5" text-anchor="middle">0</text></g></g></svg>

<!-- CANVAS AREA -->
<div class="a" style="left:51px;top:71px;width:953px;height:639px;background:#1e1e1e"></div>
<div class="a" style="left:183px;top:141px;width:688px;height:502px;background:#fff;box-shadow:inset 0 0 0 1px #c4c4ec"></div>
<svg id="sketch" class="a" style="left:0;top:0" width="1267" height="723"><g fill="none" stroke="#4a3030" stroke-width="1.5" stroke-linecap="round" stroke-linejoin="round"><path d="M217.8 198.3C224.7 198.1 245.1 197.6 259.2 196.9C273.3 196.2 289.8 195.2 302.3 194.0C314.8 192.8 328.7 190.4 334.0 189.7"/><path d="M212.4 204.0L217.8 198.3"/><path d="M183.6 254.4C186.0 251.5 193.3 242.8 198.0 237.2C202.7 231.6 209.2 226.1 211.7 221.0C214.2 215.9 212.8 209.0 213.0 206.6"/><path d="M208.8 231.8C210.0 231.6 213.6 233.1 216.0 230.7C218.4 228.3 221.2 222.2 223.2 217.4C225.2 212.6 227.1 204.5 227.9 201.9"/><path d="M337.6 190.4C338.9 193.7 341.2 203.9 345.5 210.2C349.8 216.5 356.3 222.5 363.5 228.2C370.7 233.9 381.8 239.3 388.7 244.4C395.6 249.5 402.2 256.3 404.9 258.7"/><path d="M352.0 195.8C354.5 198.5 360.1 205.4 367.1 212.0C374.1 218.6 388.6 230.3 394.1 235.4C399.6 240.5 398.7 239.4 400.2 242.6C401.7 245.8 402.6 252.4 403.1 254.4"/><path d="M185.4 272.0C196.5 271.3 227.7 268.7 252.0 267.7C276.3 266.7 310.7 267.0 331.1 266.0C351.5 265.0 362.0 263.4 374.3 261.6C386.6 259.8 399.8 256.2 404.9 255.1"/><path d="M377.2 272.4L379.7 266.0"/><path d="M196.2 291.1C196.4 295.9 196.1 311.5 197.3 319.9C198.5 328.3 202.3 334.8 203.4 341.5C204.5 348.2 204.0 357.1 204.1 360.2"/><path d="M383.3 269.5C384.5 274.3 388.7 288.1 390.5 298.3C392.3 308.5 394.4 321.7 394.1 330.7C393.8 339.7 391.2 347.4 388.7 352.3C386.2 357.2 379.0 358.7 379.0 360.2C379.0 361.7 387.1 361.1 388.7 361.3"/><path d="M183.6 381.1C189.0 380.0 201.6 376.9 216.0 374.6C230.4 372.3 246.9 369.6 270.0 367.4C293.1 365.2 340.4 362.3 354.5 361.3"/><path d="M183.0 388.3C186.1 387.2 195.8 384.3 201.6 381.8C207.4 379.3 215.1 374.6 217.8 373.2"/><path d="M248.4 380.4C250.8 381.4 255.0 385.3 262.8 386.5C270.6 387.7 283.7 387.9 295.1 387.6C306.5 387.3 325.1 385.2 331.1 384.7"/><path d="M252.0 379.3C261.0 378.5 288.0 375.8 306.0 374.6C324.0 373.4 347.4 373.7 360.0 372.1C372.6 370.5 376.5 366.8 381.5 364.9C386.5 363.0 388.6 361.6 390.0 361.0"/><path d="M340.1 381.8C347.0 382.3 369.8 383.6 381.5 384.7C393.2 385.8 405.5 387.7 410.3 388.3"/><path d="M509.8 181.4C516.7 180.5 534.6 177.4 551.1 176.0C567.6 174.6 593.9 172.8 608.7 173.1C623.5 173.4 631.6 176.9 640.0 177.8C648.4 178.8 651.5 178.5 658.8 178.8C666.1 179.1 678.6 180.4 684.0 179.6C689.4 178.8 689.7 175.5 691.2 174.2C692.7 172.9 692.7 172.1 693.0 171.7"/><path d="M671.4 171.7L705.5 171.7"/><path d="M698.3 161.6C703.7 160.1 716.9 155.5 730.7 152.6C744.5 149.7 767.6 145.8 781.1 144.3C794.6 142.8 806.6 143.7 811.7 143.6"/><path d="M817.0 152.6C820.0 154.1 829.3 157.9 835.0 161.6C840.7 165.3 848.5 172.7 851.2 174.9"/><path d="M822.4 192.2C825.7 191.8 835.9 191.0 842.2 189.6C848.5 188.2 857.2 184.8 860.2 183.9"/><path d="M492.8 223.5C492.6 222.5 493.5 221.4 491.8 217.4C490.1 213.4 487.9 203.6 482.8 199.4C477.7 195.2 469.6 190.1 461.2 192.2C452.8 194.3 440.1 204.5 432.4 212.0C424.7 219.5 418.1 230.0 415.1 237.2C412.1 244.4 413.6 248.5 414.4 255.1C415.2 261.7 418.9 267.7 419.8 276.7C420.7 285.7 420.4 297.1 419.8 309.1C419.2 321.1 418.0 336.9 416.2 348.7C414.4 360.5 411.7 372.3 409.0 380.0C406.3 387.7 403.2 389.1 399.9 394.7C396.5 400.3 396.2 410.0 388.9 413.7C381.6 417.4 361.4 416.1 355.9 416.6"/><path d="M463.0 242.6C462.8 240.8 460.4 235.0 461.9 231.8C463.4 228.6 467.3 225.1 472.0 223.5C476.7 221.9 484.9 221.8 490.0 222.0C495.1 222.2 500.1 223.6 502.6 224.6C505.1 225.6 504.7 227.6 505.1 228.2"/><path d="M468.4 237.2C473.8 236.7 489.4 235.4 500.8 234.3C512.2 233.2 528.3 230.7 536.7 230.7C545.1 230.7 545.1 232.0 551.1 234.3C557.1 236.6 566.7 240.3 572.7 244.4C578.7 248.5 583.8 252.1 587.1 258.7C590.4 265.3 591.3 276.2 592.5 284.0C593.7 291.8 594.6 297.1 594.3 305.5C594.0 313.9 591.9 327.7 590.7 334.3C589.5 340.9 587.7 343.3 587.1 345.1"/><path d="M461.2 251.5C458.8 253.9 450.4 260.6 446.8 266.0C443.2 271.4 441.4 276.2 439.6 284.0C437.8 291.8 436.6 301.9 436.0 312.7C435.4 323.5 435.8 337.5 436.0 348.7C436.2 359.9 437.5 371.1 437.0 380.0C436.5 388.9 436.1 393.4 433.0 402.0C429.9 410.6 420.8 426.4 418.3 431.3"/><path d="M446.8 296.5C451.0 294.7 461.8 289.3 472.0 285.7C482.2 282.1 508.0 277.7 508.0 275.0C508.0 272.3 479.5 270.9 472.0 269.5C464.5 268.1 464.5 267.2 463.0 266.7"/><path d="M482.8 244.4C488.2 246.8 506.4 253.3 515.1 258.7C523.8 264.1 531.1 272.8 535.0 276.7C538.9 280.6 537.9 281.2 538.5 282.1"/><path d="M526.0 273.1C524.2 274.9 518.4 279.2 515.1 284.0C511.8 288.8 508.3 296.0 506.2 302.0C504.1 308.0 502.6 314.5 502.6 319.9C502.6 325.3 505.6 331.9 506.2 334.3"/><path d="M536.7 276.7C534.6 278.5 527.8 283.3 524.2 287.5C520.6 291.7 517.8 297.8 515.1 302.0C512.4 306.2 509.2 310.9 508.0 312.7"/><path d="M477.4 284.0C486.7 284.0 518.4 284.7 533.1 284.0C547.8 283.3 557.1 280.8 565.5 279.6C573.9 278.4 579.6 276.3 583.5 276.7C587.4 277.1 588.0 281.2 588.9 282.1"/><path d="M558.3 248.0L559.0 271.3"/><path d="M448.6 312.7C448.0 313.9 445.0 316.3 445.0 319.9C445.0 323.5 446.5 330.1 448.6 334.3C450.7 338.5 456.1 343.3 457.6 345.1"/><path d="M479.2 287.5C478.9 292.9 477.7 308.5 477.4 319.9C477.1 331.3 477.1 343.9 477.4 355.9C477.7 367.9 478.9 385.9 479.2 391.9"/><path d="M454.0 305.5C454.3 311.5 454.9 330.1 455.8 341.5C456.7 352.9 458.5 365.5 459.4 373.9C460.3 382.3 459.2 390.9 461.2 391.9C463.2 392.9 469.8 382.0 471.5 380.0"/><path d="M471.5 380.0C472.7 383.7 476.1 394.1 478.8 402.0C481.5 409.9 485.5 417.8 487.9 427.6C490.3 437.4 492.5 455.1 493.4 460.6"/><path d="M484.6 319.9C486.7 319.0 490.9 315.1 497.2 314.5C503.5 313.9 518.1 316.0 522.3 316.3"/><path d="M490.0 303.7C492.4 304.0 498.7 304.6 504.4 305.5C510.1 306.4 520.9 308.5 524.2 309.1"/><path d="M517.0 319.9C517.5 321.1 519.8 324.4 519.8 327.1C519.8 329.8 519.0 334.0 517.0 336.1C515.0 338.2 511.0 340.0 508.0 339.7C505.0 339.4 500.8 337.0 499.0 334.3C497.2 331.6 497.5 325.3 497.2 323.5"/><path d="M549.3 318.1C551.4 316.6 556.5 311.8 561.9 309.1C567.3 306.4 578.4 303.1 581.7 301.9"/><path d="M552.9 319.9C556.2 318.6 567.9 312.6 572.7 312.0C577.5 311.4 580.2 315.6 581.7 316.3"/><path d="M556.5 323.5C556.8 325.0 556.8 330.4 558.3 332.5C559.8 334.6 563.1 336.1 565.5 336.1C567.9 336.1 571.2 334.6 572.7 332.5C574.2 330.4 574.2 325.0 574.5 323.5"/><path d="M518.7 362.0L522.0 362.6"/><path d="M526.0 363.0L529.5 363.1"/><path d="M542.1 361.3L551.1 355.9"/><path d="M484.6 370.3C486.1 371.8 489.4 376.5 493.6 379.3C497.8 382.1 502.9 385.4 509.9 387.3C516.9 389.2 528.3 391.1 535.6 391.0C542.9 390.9 548.3 388.6 553.9 386.6C559.5 384.7 564.2 382.6 569.1 379.3C574.0 376.0 579.9 373.0 583.5 366.7C587.1 360.4 589.5 345.7 590.7 341.5"/><path d="M587.1 341.5C588.3 343.9 591.9 348.7 594.3 355.9C596.7 363.1 599.7 377.0 601.5 384.7C603.3 392.4 603.4 396.1 605.2 402.0C607.0 407.9 611.3 417.2 612.5 420.3"/><path d="M400.0 388.3C401.8 388.2 408.1 387.5 410.8 387.6C413.5 387.8 415.3 388.9 416.2 389.2"/><path d="M626.7 366.7C627.9 369.1 632.1 377.7 633.9 381.1C635.7 384.5 636.7 386.3 637.3 387.3"/><path d="M746.9 201.9C745.4 205.1 741.5 213.2 737.9 220.9C734.3 228.6 728.3 235.6 725.3 247.9C722.3 260.2 721.4 279.1 719.9 294.7C718.4 310.3 717.5 325.5 716.3 341.4C715.1 357.3 713.8 376.9 712.5 390.0C711.2 403.1 710.0 414.0 708.8 420.3C707.6 426.6 705.8 426.5 705.2 427.7"/><path d="M727.1 247.9C726.4 255.7 724.1 279.1 722.8 294.7C721.5 310.3 720.3 325.5 719.2 341.4C718.1 357.3 717.1 376.9 716.0 390.0C714.9 403.1 713.1 415.2 712.5 420.3"/><path d="M744.4 211.9C744.8 216.7 746.5 226.9 746.9 240.7C747.3 254.5 747.8 277.9 746.9 294.7C746.0 311.5 743.1 325.5 741.5 341.4C739.9 357.3 738.2 378.7 737.0 390.0C735.8 401.3 736.5 401.8 734.5 409.3C732.5 416.8 726.8 430.7 725.3 435.0"/><path d="M744.4 213.7C745.0 211.7 746.8 201.6 748.0 201.9C749.2 202.2 751.0 213.2 751.6 215.5"/><path d="M731.4 346.8L725.3 399.0"/><path d="M668.5 433.2C674.3 432.9 692.0 431.0 703.3 431.3C714.6 431.6 729.6 432.6 736.3 435.0C743.0 437.4 742.5 444.2 743.7 446.0"/><path d="M675.8 429.5C680.4 428.9 694.4 425.8 703.3 425.8C712.2 425.8 724.7 428.9 729.0 429.5"/><path d="M670.3 434.3L736.3 438.7"/><path d="M685.0 447.8C688.0 447.2 698.1 444.5 703.3 444.2C708.5 443.9 713.8 442.0 716.2 446.0C718.7 450.0 717.7 464.3 718.0 468.0"/><path d="M703.3 435.0C703.3 439.9 700.5 458.2 703.3 464.3C706.0 470.4 717.0 470.5 719.8 471.7"/><path d="M705.2 477.2L718.0 471.7"/><path d="M719.8 455.2L725.3 458.8"/><path d="M630.0 360.1C632.4 361.5 639.9 364.9 644.4 368.4C648.9 371.9 654.2 376.0 657.0 381.0C659.8 386.0 660.9 392.4 661.2 398.3C661.5 404.2 659.0 413.6 658.6 416.7"/><path d="M631.8 373.8L639.0 391.8"/><path d="M698.3 381.7C697.6 384.5 696.7 393.7 694.2 398.3C691.7 402.9 685.0 407.5 683.2 409.3"/><path d="M773.9 386.4C776.2 390.8 783.0 404.9 787.7 413.0C792.5 421.1 798.9 431.3 802.4 435.0C805.9 438.7 807.9 435.0 809.0 435.0"/><path d="M862.9 447.8C862.6 451.2 863.8 462.7 861.0 468.0C858.2 473.3 848.8 477.8 846.4 479.7"/><path d="M630.0 444.2C633.7 445.4 647.1 447.8 652.0 451.5C656.9 455.2 658.1 463.8 659.3 466.2"/><path d="M652.0 449.7L677.7 452.2"/><path d="M663.0 449.7L675.8 469.8"/><path d="M686.8 453.3C688.3 458.2 693.5 473.8 696.0 482.7C698.5 491.6 700.6 502.5 701.5 506.5"/><path d="M630.0 502.8C633.7 504.6 643.5 510.7 652.0 513.8C660.5 516.9 676.4 520.0 681.3 521.2"/><path d="M697.8 468.0C697.5 472.9 697.2 489.4 696.0 497.3C694.8 505.2 693.5 510.5 690.5 515.7C687.5 520.9 679.8 526.4 677.7 528.5"/><path d="M659.3 572.5C661.8 574.0 663.6 579.2 674.0 581.7C684.4 584.2 705.2 586.1 721.7 587.2C738.2 588.3 763.2 587.4 773.0 588.3C782.8 589.2 775.7 590.9 780.3 592.7C784.9 594.5 796.8 596.8 800.5 599.3C804.2 601.8 802.1 606.0 802.4 607.4"/><path d="M630.0 600.0C631.5 603.1 635.8 611.7 639.2 618.4C642.6 625.1 648.4 636.7 650.2 640.4"/><path d="M288.1 456.2C290.9 456.4 297.0 458.8 304.6 457.7C312.2 456.6 322.6 452.2 333.9 449.6C345.2 447.0 366.0 443.5 372.4 442.3"/><path d="M289.9 506.4C297.2 506.1 320.1 505.6 333.9 504.6C347.6 503.6 366.0 500.9 372.4 500.2"/><path d="M420.0 462.4C416.6 465.8 407.5 475.0 399.9 482.6C392.3 490.2 379.7 501.6 374.2 508.3C368.7 515.0 367.8 518.0 366.9 522.9C366.0 527.8 367.2 533.5 368.7 537.6C370.2 541.8 374.8 546.1 376.0 547.8"/><path d="M390.7 561.4C392.5 565.1 397.1 577.0 401.7 583.4C406.3 589.8 415.4 597.1 418.2 599.9"/><path d="M410.9 539.4L420.0 540.1"/><path d="M491.6 385.5L491.6 405.7"/><path d="M531.9 391.0L535.6 402.0"/><path d="M477.0 403.8C481.3 404.4 494.7 406.0 502.6 407.5C510.5 409.0 519.1 409.6 524.6 413.0C530.1 416.4 533.5 423.3 535.6 427.6C537.7 431.9 537.1 436.8 537.4 438.6"/><path d="M466.0 413.0C472.1 414.5 491.3 418.1 502.6 422.1C513.9 426.1 528.5 434.4 533.7 436.8"/><path d="M533.7 436.8C536.8 433.1 550.6 420.0 552.1 414.8C553.6 409.6 544.4 407.2 542.9 405.7"/><path d="M478.8 407.5C474.8 411.5 464.5 422.4 455.0 431.3C445.5 440.2 431.2 452.1 422.0 460.6C412.8 469.2 403.7 478.9 400.0 482.6"/><path d="M449.5 436.8L484.3 434.2"/><path d="M471.5 460.6C470.9 465.5 470.6 478.9 467.8 489.9C465.1 500.9 459.9 515.3 455.0 526.6C450.1 537.9 441.2 552.5 438.5 557.7"/><path d="M526.4 468.0C529.8 472.9 540.5 488.8 546.6 497.3C552.7 505.8 558.8 513.7 563.1 519.2C567.4 524.7 570.7 528.4 572.2 530.2"/><path d="M541.1 446.0C543.2 449.1 550.5 457.6 553.9 464.3C557.2 471.0 560.0 482.6 561.2 486.3"/><path d="M541.1 427.6C543.9 431.9 553.0 442.9 557.6 453.3C562.2 463.7 564.6 478.9 568.6 489.9C572.6 500.9 578.4 511.9 581.4 519.2C584.4 526.5 586.0 531.5 586.9 533.9"/><path d="M561.2 420.3C564.9 423.4 578.6 427.0 583.2 438.6C587.8 450.2 587.8 481.3 588.7 489.9"/><path d="M568.6 424.0C574.7 426.4 593.3 434.6 605.2 438.6C617.1 442.6 634.2 446.3 640.0 447.8"/><path d="M616.2 424.0L627.2 449.6"/><path d="M603.4 478.9C604.9 480.1 609.8 484.5 612.5 486.3C615.2 488.1 618.7 489.3 619.9 489.9"/><path d="M623.5 499.1L640.0 508.3"/><path d="M484.3 549.3C493.5 549.3 527.6 549.7 539.2 549.3C550.8 548.9 546.9 548.1 553.9 546.7C560.9 545.4 576.8 542.1 581.4 541.2"/><path d="M489.8 555.9C500.5 556.2 538.6 558.3 553.9 557.7C569.2 557.1 576.8 553.1 581.4 552.2"/><path d="M555.7 546.7C559.7 545.8 575.3 540.3 579.6 541.2C583.9 542.1 585.1 549.9 581.4 552.2C577.7 554.5 561.9 556.1 557.6 555.2C553.3 554.3 556.0 548.1 555.7 546.7"/><path d="M489.8 549.3L489.8 555.9"/><path d="M572.2 530.2C576.5 529.9 593.6 530.2 597.9 528.4C602.2 526.6 597.9 520.7 597.9 519.2"/><path d="M583.2 541.2L594.2 537.6"/><path d="M579.6 563.2C579.9 569.3 580.8 586.8 581.4 599.9C582.0 613.0 582.9 635.0 583.2 642.0"/><path d="M590.5 548.6C590.8 557.1 591.8 584.3 592.4 599.9C593.0 615.5 593.9 635.0 594.2 642.0"/><path d="M601.5 548.6C604.6 554.7 614.4 573.6 619.9 585.2C625.4 596.8 632.1 612.7 634.5 618.2"/><path d="M425.7 526.6C428.1 527.8 435.4 530.2 440.3 533.9C445.2 537.6 450.4 541.3 455.0 548.6C459.6 555.9 465.7 573.0 467.8 577.9"/><path d="M411.0 539.4C415.3 540.3 430.5 542.8 436.6 544.9C442.7 547.0 445.8 551.0 447.6 552.2"/><path d="M451.3 537.6C452.8 538.8 459.3 541.2 460.5 544.9C461.7 548.5 457.4 555.2 458.6 559.5C459.8 563.8 466.6 564.4 467.8 570.5C469.0 576.6 466.3 591.9 466.0 596.2"/><path d="M466.0 521.1L471.5 530.2"/><path d="M480.6 559.5C479.1 563.8 473.6 575.4 471.5 585.2C469.4 595.0 468.7 609.4 467.8 618.2C466.9 627.1 466.3 634.9 466.0 638.3"/><path d="M466.0 574.2C462.9 579.7 452.8 596.8 447.6 607.2C442.4 617.6 436.9 631.6 434.8 636.5"/><path d="M716.2 380.0L708.8 420.3"/><path d="M738.2 380.0L734.5 409.3"/></g><g fill="none" stroke="#8a7474" stroke-width="1.2" stroke-linecap="round" opacity="0.7"><path d="M425.5 486.3C429.2 480.2 440.2 461.2 447.6 449.6C455.0 438.0 465.9 422.1 469.6 416.6"/><path d="M429.3 612.7L478.8 612.7"/><path d="M807.9 402.7C811.9 406.2 825.0 416.5 831.7 424.0C838.4 431.5 845.5 443.8 848.2 447.8"/></g></svg>

<!-- V SCROLLBAR -->
<div class="a" style="left:1004px;top:71px;width:11px;height:641px;background:#232323"></div>
<div class="a" style="left:1005px;top:88px;width:9.5px;height:419px;background:#343434;border-radius:2px"></div>
<!-- STATUS / H SCROLL -->
<div class="a" style="left:51px;top:711px;width:482px;height:12px;background:#2c2c2c"></div>
<div class="a" style="left:533px;top:711px;width:471px;height:12px;background:#222"></div>
<div class="a" style="left:683.7px;top:712px;width:170.6px;height:9.5px;background:#363636;border-radius:4px"></div>
<div class="a" style="left:1004px;top:712px;width:11px;height:11px;background:#000"></div>
<svg class="a" style="left:0;top:0" width="1267" height="723"><g fill="none" stroke="#aaa" stroke-width="1"><path d="M540.5 714L538 716.8L540.5 719.6M997.5 714L1000 716.8L997.5 719.6M1007 704.5L1009.5 707L1012 704.5M1007 79.5L1009.5 77L1012 79.5"/></g></svg>
<div class="t" style="left:58px;top:714px;font-size:8px;color:#c8c8c8;transform:scaleX(1.007);transform-origin:0 0">X:0.00 Y:0.00 W:2500.00 H:1824.00 角度:0.00</div>
<div class="t" style="left:250px;top:714px;font-size:8px;color:#bbb;transform:scaleX(1.027);transform-origin:0 0">未标题 ( 2500 * 1824 像素 @ 72 dpi )</div>

<!-- SEPARATOR -->
<div class="a" style="left:1015px;top:35px;width:3px;height:688px;background:#1c1c1c"></div>

<!-- RIGHT PANEL -->
<div id="right" class="a" style="left:1018px;top:35px;width:249px;height:688px;background:#323232"></div>
<div class="a" style="left:1018px;top:35px;width:249px;height:11px;background:#323232;border-top:1px solid #2a2a2a"></div>
<div class="a" style="left:1018px;top:46px;width:249px;height:26px;background:#262626"></div>
<div class="a" style="left:1018px;top:46px;width:52px;height:26px;background:#323232"></div>
<div class="a" style="left:1121px;top:46px;width:1px;height:26px;background:#363636"></div>
<div class="a" style="left:1173px;top:46px;width:1px;height:26px;background:#363636"></div>
<div class="t" style="left:1024.5px;top:55px;font-size:10px;color:#f0f0f0;transform:scaleX(0.948);transform-origin:0 0">属性设置</div>
<div class="t" style="left:1076.5px;top:55px;font-size:10px;color:#b8b8b8;transform:scaleX(0.950);transform-origin:0 0">添加对象</div>
<div class="t" style="left:1133px;top:55px;font-size:10px;color:#b8b8b8;transform:scaleX(0.944);transform-origin:0 0">亦心AI</div>
<div class="a" style="left:1025px;top:81px;width:16px;height:10px;background:#3e0f0f;border:1px solid #555"></div>
<div class="a" style="left:1043px;top:81px;width:51px;height:12px;border:1px solid #555;background:#2c2c2c"></div>
<div class="a" style="left:1166px;top:82.5px;width:22.5px;height:13.5px;background:#222;border-radius:3px"></div>
<div class="t" style="left:1168px;top:85.5px;font-size:8px;color:#e8e8e8;transform:scaleX(1.094);transform-origin:0 0">HSV</div>
<div class="t" style="left:1195px;top:85.5px;font-size:7px;color:#d8d8d8;transform:scaleX(0.863);transform-origin:0 0">RGB</div>
<div class="t" style="left:1220px;top:85.5px;font-size:7px;color:#d8d8d8;transform:scaleX(0.979);transform-origin:0 0">CMYK</div>
<div class="a" style="left:1140px;top:120px;width:73.5px;height:3px;background:linear-gradient(90deg,#ff0000,#ffff00 17%,#00ff00 33%,#00ffff 50%,#0000ff 67%,#ff00ff 83%,#ff0000)"></div>
<div class="a" style="left:1140px;top:150px;width:73.5px;height:3px;background:linear-gradient(90deg,#ffffff,#ff0000)"></div>
<div class="a" style="left:1140px;top:179.5px;width:73.5px;height:3px;background:linear-gradient(90deg,#000,#fff)"></div>
<div class="a" style="left:1217.5px;top:113px;width:41.5px;height:16.5px;background:#2a2a2a;border:1px solid #4a4a4a;border-radius:2px"></div>
<div class="a" style="left:1217.5px;top:142.5px;width:41.5px;height:16.5px;background:#2a2a2a;border:1px solid #4a4a4a;border-radius:2px"></div>
<div class="a" style="left:1217.5px;top:172px;width:41.5px;height:16.5px;background:#2a2a2a;border:1px solid #4a4a4a;border-radius:2px"></div>
<div class="t" style="left:1219.5px;top:116.5px;font-size:10px;color:#eee">0</div>
<div class="t" style="left:1219.5px;top:146px;font-size:10px;color:#eee">70</div>
<div class="t" style="left:1219.5px;top:175.5px;font-size:10px;color:#eee">20</div>
<div class="a" style="left:1189.5px;top:209.5px;width:69.5px;height:19px;background:#4a4a4a;border:1px solid #555;border-radius:2px"></div>
<div class="t" style="left:1196px;top:214px;font-size:9px;color:#9a9a9a;transform:scaleX(1.000);transform-origin:0 0">正常</div>
<div class="a" style="left:1140px;top:243.5px;width:61px;height:2.5px;background:#777"></div>
<div class="a" style="left:1203px;top:237px;width:56px;height:16px;background:#2a2a2a;border:1px solid #4a4a4a;border-radius:2px"></div>
<div class="t" style="left:1205px;top:240px;font-size:8.5px;color:#eee;transform:scaleX(0.992);transform-origin:0 0">6 像素</div>
<div class="a" style="left:1140px;top:275.5px;width:56px;height:2.5px;background:#1e88e5"></div>
<div class="a" style="left:1203px;top:268px;width:56px;height:16.5px;background:#2a2a2a;border:1px solid #4a4a4a;border-radius:2px"></div>
<div class="t" style="left:1205px;top:271px;font-size:8.3px;color:#eee;transform:scaleX(1.105);transform-origin:0 0">100 %</div>
<div class="a" style="left:1191.5px;top:272px;width:9px;height:9px;background:#eee;border-radius:50%"></div>
<div class="a" style="left:1262.5px;top:79px;width:2.5px;height:276px;background:#6e6e6e;border-radius:1px"></div>
<!-- brushes -->
<div class="a" style="left:1018px;top:320px;width:61px;height:164px;background:#303030;border-right:1px solid #555"></div>
<div class="a" style="left:1018px;top:319.5px;width:246px;height:1.5px;background:#232323"></div><div class="a" style="left:1080px;top:320px;width:182px;height:164px;background:#232323"></div>
<div class="a" style="left:1087px;top:322px;width:167.5px;height:38px;background:#363636"></div>
<div class="a" style="left:1087px;top:364px;width:167.5px;height:38.5px;background:#363636"></div>
<div class="a" style="left:1087px;top:406.3px;width:167.5px;height:38.6px;background:#363636"></div>
<div class="a" style="left:1087px;top:448.5px;width:167.5px;height:35px;background:#0a7cff"></div>
<div class="a" style="left:1258.8px;top:323px;width:1.8px;height:160px;background:#5e5e5e"></div>
<div class="t" style="left:1096px;top:409.8px;font-size:8.2px;color:#eee;transform:scaleX(1.019);transform-origin:0 0">6B铅笔</div>
<div class="t" style="left:1096px;top:451.3px;font-size:8.1px;color:#eee;transform:scaleX(1.018);transform-origin:0 0">颗粒感粉笔</div>
<div class="t" style="left:1034.5px;top:394.3px;font-size:9.3px;color:#e8e8e8;transform:scaleX(1.061);transform-origin:0 0">素描</div>
<div class="t" style="left:1034.5px;top:417.3px;font-size:9.3px;color:#e8e8e8;transform:scaleX(1.061);transform-origin:0 0">水彩</div>
<div class="t" style="left:1034.5px;top:440.3px;font-size:9.3px;color:#e8e8e8;transform:scaleX(1.061);transform-origin:0 0">油画</div>
<div class="t" style="left:1034.5px;top:463.3px;font-size:9.3px;color:#e8e8e8;transform:scaleX(1.048);transform-origin:0 0">马克笔</div>
<!-- layers -->
<div class="a" style="left:1018px;top:484px;width:249px;height:2px;background:#262626"></div>
<div class="a" style="left:1018px;top:486px;width:249px;height:25px;background:#262626"></div>
<div class="a" style="left:1018px;top:486px;width:52px;height:25px;background:#323232"></div>
<div class="a" style="left:1121px;top:486px;width:1px;height:25px;background:#363636"></div>
<div class="a" style="left:1173px;top:486px;width:1px;height:25px;background:#363636"></div>
<div class="t" style="left:1033.5px;top:494.2px;font-size:10px;color:#f0f0f0;transform:scaleX(0.940);transform-origin:0 0">图层</div>
<div class="t" style="left:1086px;top:494.2px;font-size:10px;color:#b8b8b8;transform:scaleX(0.975);transform-origin:0 0">通道</div>
<div class="t" style="left:1128px;top:494.2px;font-size:10px;color:#b8b8b8;transform:scaleX(0.957);transform-origin:0 0">操作记录</div>
<div class="t" style="left:1022.5px;top:526.2px;font-size:8.8px;color:#e0e0e0;transform:scaleX(0.915);transform-origin:0 0">混合模式:</div>
<div class="a" style="left:1079px;top:519.3px;width:182.6px;height:20.5px;background:#262626;border:1px solid #4e4e4e;border-radius:2px"></div>
<div class="t" style="left:1086px;top:526.2px;font-size:8.8px;color:#e8e8e8;transform:scaleX(1.000);transform-origin:0 0">正常</div>
<div class="t" style="left:1022.5px;top:551.2px;font-size:8.8px;color:#e0e0e0;transform:scaleX(0.915);transform-origin:0 0">不透明度:</div>
<div class="a" style="left:1078.6px;top:553.3px;width:137px;height:2.6px;background:#f2f2f2;border-radius:1px"></div>
<div class="a" style="left:1211.3px;top:550.8px;width:8px;height:8px;background:#f4f4f4;border-radius:50%"></div>
<div class="t" style="left:1224.5px;top:550.2px;font-size:10px;color:#e8e8e8;transform:scaleX(0.953);transform-origin:0 0">100</div>
<div class="t" style="left:1245.5px;top:550.7px;font-size:7px;color:#e8e8e8;transform:scaleX(0.962);transform-origin:0 0">%</div>
<div class="t" style="left:1069.7px;top:577.2px;font-size:7.6px;color:#e0e0e0;transform:scaleX(0.931);transform-origin:0 0">剪贴蒙版</div>
<div class="t" style="left:1192.6px;top:577.2px;font-size:7.6px;color:#e0e0e0;transform:scaleX(0.944);transform-origin:0 0">图层样式</div>
<div class="a" style="left:1018px;top:595px;width:249px;height:1px;background:#262626"></div>
<div class="a" style="left:1021px;top:596px;width:227px;height:27px;background:#3a3a3a"></div>
<div class="a" style="left:1021px;top:624px;width:227px;height:27px;background:#45506e"></div>
<div class="a" style="left:1021px;top:652px;width:227px;height:27px;background:#3a3a3a"></div>
<div class="a" style="left:1018px;top:623px;width:246px;height:1px;background:#282828"></div>
<div class="a" style="left:1018px;top:651px;width:246px;height:1px;background:#282828"></div>
<div class="a" style="left:1018px;top:679px;width:246px;height:1px;background:#282828"></div>
<div class="a" style="left:1025px;top:599px;width:21px;height:21.5px;background:conic-gradient(#d4d4d4 25%,#fff 0 50%,#d4d4d4 0 75%,#fff 0) 0 0/6px 6px"></div>
<div class="a" style="left:1025px;top:627px;width:21px;height:21.5px;background:conic-gradient(#d4d4d4 25%,#fff 0 50%,#d4d4d4 0 75%,#fff 0) 0 0/6px 6px"></div>
<div class="a" style="left:1025px;top:655px;width:21px;height:21.5px;background:#fff"></div>
<div class="t" style="left:1054.8px;top:607.2px;font-size:6.6px;color:#e8e8e8;transform:scaleX(0.958);transform-origin:0 0">未命名 2</div>
<div class="t" style="left:1054.8px;top:635.2px;font-size:6.6px;color:#e8e8e8;transform:scaleX(0.958);transform-origin:0 0">未命名 1</div>
<div class="t" style="left:1054.8px;top:662.7px;font-size:6.5px;color:#e8e8e8;transform:scaleX(0.921);transform-origin:0 0">背景</div>
<svg class="a" style="left:0;top:0" width="1267" height="723">
<g fill="#e8e8e8">
<path d="M1250.5 610Q1255.3 604.5 1260 610Q1255.3 615.5 1250.5 610Z"/>
<path d="M1250.5 637.5Q1255.3 632 1260 637.5Q1255.3 643 1250.5 637.5Z"/>
<path d="M1250.5 665Q1255.3 659.5 1260 665Q1255.3 670.5 1250.5 665Z"/>
</g>
<g fill="#333"><circle cx="1255.3" cy="610" r="1.8"/><circle cx="1255.3" cy="637.5" r="1.8"/><circle cx="1255.3" cy="665" r="1.8"/></g>
<g fill="#eee"><circle cx="1255.3" cy="610" r="1"/><circle cx="1255.3" cy="637.5" r="1"/><circle cx="1255.3" cy="665" r="1"/></g>
<g fill="none" stroke="#8a8a8a" stroke-width="1">
<path d="M1236.5 609V607.5Q1236.5 605.5 1238.5 605.5Q1240.3 605.5 1240.5 607"/>
<path d="M1236.5 636.5V635Q1236.5 633 1238.5 633Q1240.3 633 1240.5 634.5"/>
<path d="M1237 664.5V662Q1237 660 1239.5 660Q1242 660 1242 662V664.5"/>
<rect x="1236.2" y="664.5" width="6.8" height="5" rx="0.6"/>
</g>
<g fill="#8a8a8a"><rect x="1238" y="609" width="6" height="5"/><rect x="1238" y="636.5" width="6" height="5"/></g>
<path d="M1250 527L1253 530L1256 527" fill="none" stroke="#ddd" stroke-width="1.1"/>
<path d="M1248 216.5L1251 219.5L1254 216.5" fill="none" stroke="#aaa" stroke-width="1.1"/>
<g fill="#f0f0f0">
<rect x="1248" y="83" width="2.6" height="2.6"/><rect x="1251.5" y="83" width="2.6" height="2.6"/><rect x="1255" y="83" width="2.6" height="2.6"/>
<rect x="1248" y="86.5" width="2.6" height="2.6"/><rect x="1251.5" y="86.5" width="2.6" height="2.6"/><rect x="1255" y="86.5" width="2.6" height="2.6"/>
<rect x="1248" y="90" width="2.6" height="2.6"/><rect x="1251.5" y="90" width="2.6" height="2.6"/><rect x="1255" y="90" width="2.6" height="2.6"/>
</g>
<g fill="#555"><circle cx="1255" cy="52.5" r="1"/><circle cx="1259" cy="52.5" r="1"/><circle cx="1255" cy="56.5" r="1"/><circle cx="1259" cy="56.5" r="1"/><circle cx="1255" cy="60.5" r="1"/><circle cx="1259" cy="60.5" r="1"/><circle cx="1255" cy="64.5" r="1"/><circle cx="1259" cy="64.5" r="1"/>
<circle cx="1255" cy="492" r="1"/><circle cx="1259" cy="492" r="1"/><circle cx="1255" cy="496" r="1"/><circle cx="1259" cy="496" r="1"/><circle cx="1255" cy="500" r="1"/><circle cx="1259" cy="500" r="1"/><circle cx="1255" cy="504" r="1"/><circle cx="1259" cy="504" r="1"/></g>
<path d="M1187.5 153.5L1190 150L1192.5 153.5V156H1187.5Z" fill="#f4f4f4"/>
<g fill="none" stroke-linecap="round">
<path d="M1175 355Q1205 356 1241.5 338.5" stroke="#cfcfcf" stroke-width="2.6"/>
</g><g fill="#d8d8d8"><rect x="1141.1" y="393.5" width="1" height="1" fill-opacity="0.71"/><rect x="1191.1" y="392.2" width="1" height="1" fill-opacity="0.85"/><rect x="1145.1" y="398.0" width="1" height="1" fill-opacity="0.63"/><rect x="1217.9" y="387.5" width="1" height="1" fill-opacity="0.44"/><rect x="1193.1" y="390.2" width="1" height="1" fill-opacity="0.79"/><rect x="1198.8" y="392.6" width="1" height="1" fill-opacity="0.70"/><rect x="1152.1" y="394.7" width="1" height="1" fill-opacity="0.63"/><rect x="1204.7" y="387.9" width="1" height="1" fill-opacity="0.90"/><rect x="1161.7" y="392.8" width="1" height="1" fill-opacity="0.91"/><rect x="1226.1" y="386.4" width="1" height="1" fill-opacity="0.48"/><rect x="1236.4" y="383.9" width="1" height="1" fill-opacity="0.53"/><rect x="1174.6" y="394.7" width="1" height="1" fill-opacity="0.70"/><rect x="1186.9" y="391.1" width="1" height="1" fill-opacity="0.91"/><rect x="1224.2" y="386.1" width="1" height="1" fill-opacity="0.45"/><rect x="1225.5" y="385.0" width="1" height="1" fill-opacity="0.69"/><rect x="1203.2" y="394.2" width="1" height="1" fill-opacity="0.69"/><rect x="1150.0" y="395.1" width="1" height="1" fill-opacity="0.94"/><rect x="1125.3" y="391.0" width="1" height="1" fill-opacity="0.44"/><rect x="1149.2" y="391.6" width="1" height="1" fill-opacity="0.38"/><rect x="1191.2" y="393.1" width="1" height="1" fill-opacity="0.55"/><rect x="1227.3" y="385.2" width="1" height="1" fill-opacity="0.95"/><rect x="1152.2" y="395.1" width="1" height="1" fill-opacity="0.37"/><rect x="1136.0" y="394.3" width="1" height="1" fill-opacity="0.44"/><rect x="1120.4" y="390.5" width="1" height="1" fill-opacity="0.93"/><rect x="1227.1" y="386.9" width="1" height="1" fill-opacity="0.66"/><rect x="1192.0" y="390.3" width="1" height="1" fill-opacity="0.72"/><rect x="1233.1" y="383.3" width="1" height="1" fill-opacity="0.78"/><rect x="1141.1" y="396.9" width="1" height="1" fill-opacity="0.66"/><rect x="1182.0" y="393.4" width="1" height="1" fill-opacity="0.70"/><rect x="1115.9" y="389.8" width="1" height="1" fill-opacity="0.39"/><rect x="1189.3" y="392.7" width="1" height="1" fill-opacity="0.56"/><rect x="1201.7" y="390.0" width="1" height="1" fill-opacity="0.39"/><rect x="1198.5" y="390.8" width="1" height="1" fill-opacity="0.62"/><rect x="1186.0" y="394.3" width="1" height="1" fill-opacity="0.54"/><rect x="1157.2" y="393.7" width="1" height="1" fill-opacity="0.58"/><rect x="1212.2" y="389.3" width="1" height="1" fill-opacity="0.79"/><rect x="1151.2" y="396.6" width="1" height="1" fill-opacity="0.49"/><rect x="1134.5" y="394.0" width="1" height="1" fill-opacity="0.41"/><rect x="1151.1" y="396.5" width="1" height="1" fill-opacity="0.61"/><rect x="1222.8" y="388.3" width="1" height="1" fill-opacity="0.74"/><rect x="1225.6" y="385.9" width="1" height="1" fill-opacity="0.42"/><rect x="1179.1" y="396.4" width="1" height="1" fill-opacity="0.85"/><rect x="1135.4" y="395.2" width="1" height="1" fill-opacity="0.74"/><rect x="1215.0" y="388.9" width="1" height="1" fill-opacity="0.53"/><rect x="1213.5" y="390.4" width="1" height="1" fill-opacity="0.60"/><rect x="1162.1" y="396.1" width="1" height="1" fill-opacity="0.44"/><rect x="1117.8" y="389.6" width="1" height="1" fill-opacity="0.94"/><rect x="1168.8" y="393.1" width="1" height="1" fill-opacity="0.48"/><rect x="1207.9" y="386.8" width="1" height="1" fill-opacity="0.66"/><rect x="1147.8" y="394.9" width="1" height="1" fill-opacity="0.39"/><rect x="1185.5" y="396.0" width="1" height="1" fill-opacity="0.38"/><rect x="1228.2" y="379.4" width="1" height="1" fill-opacity="0.89"/><rect x="1228.4" y="384.7" width="1" height="1" fill-opacity="0.80"/><rect x="1133.9" y="394.6" width="1" height="1" fill-opacity="0.66"/><rect x="1165.1" y="393.5" width="1" height="1" fill-opacity="0.55"/><rect x="1144.8" y="392.9" width="1" height="1" fill-opacity="0.82"/><rect x="1156.4" y="396.0" width="1" height="1" fill-opacity="0.84"/><rect x="1135.1" y="390.9" width="1" height="1" fill-opacity="0.83"/><rect x="1219.5" y="387.5" width="1" height="1" fill-opacity="0.87"/><rect x="1120.4" y="391.7" width="1" height="1" fill-opacity="0.67"/><rect x="1162.7" y="394.7" width="1" height="1" fill-opacity="0.35"/><rect x="1121.5" y="391.5" width="1" height="1" fill-opacity="0.39"/><rect x="1239.6" y="381.1" width="1" height="1" fill-opacity="0.65"/><rect x="1151.1" y="395.4" width="1" height="1" fill-opacity="0.74"/><rect x="1185.2" y="393.7" width="1" height="1" fill-opacity="0.55"/><rect x="1127.1" y="392.0" width="1" height="1" fill-opacity="0.58"/><rect x="1124.4" y="392.4" width="1" height="1" fill-opacity="0.71"/><rect x="1210.5" y="391.4" width="1" height="1" fill-opacity="0.72"/><rect x="1164.9" y="395.5" width="1" height="1" fill-opacity="0.77"/><rect x="1164.0" y="392.6" width="1" height="1" fill-opacity="0.50"/><rect x="1179.0" y="392.7" width="1" height="1" fill-opacity="0.60"/><rect x="1167.2" y="391.7" width="1" height="1" fill-opacity="0.57"/><rect x="1228.5" y="383.0" width="1" height="1" fill-opacity="0.63"/><rect x="1129.5" y="391.2" width="1" height="1" fill-opacity="0.88"/><rect x="1212.5" y="385.0" width="1" height="1" fill-opacity="0.69"/><rect x="1126.4" y="392.1" width="1" height="1" fill-opacity="0.44"/><rect x="1211.5" y="389.1" width="1" height="1" fill-opacity="0.41"/><rect x="1225.9" y="386.0" width="1" height="1" fill-opacity="0.85"/><rect x="1129.6" y="391.3" width="1" height="1" fill-opacity="0.85"/><rect x="1234.2" y="380.7" width="1" height="1" fill-opacity="0.37"/><rect x="1208.1" y="388.7" width="1" height="1" fill-opacity="0.41"/><rect x="1207.9" y="389.1" width="1" height="1" fill-opacity="0.54"/><rect x="1183.2" y="391.8" width="1" height="1" fill-opacity="0.46"/><rect x="1142.1" y="392.6" width="1" height="1" fill-opacity="0.59"/><rect x="1157.0" y="395.2" width="1" height="1" fill-opacity="0.60"/><rect x="1121.1" y="391.8" width="1" height="1" fill-opacity="0.60"/><rect x="1208.2" y="392.4" width="1" height="1" fill-opacity="0.80"/><rect x="1195.9" y="390.9" width="1" height="1" fill-opacity="0.74"/><rect x="1228.5" y="385.9" width="1" height="1" fill-opacity="0.80"/><rect x="1229.7" y="384.0" width="1" height="1" fill-opacity="0.78"/><rect x="1136.0" y="394.0" width="1" height="1" fill-opacity="0.70"/><rect x="1151.6" y="396.3" width="1" height="1" fill-opacity="0.92"/><rect x="1148.8" y="392.9" width="1" height="1" fill-opacity="0.86"/><rect x="1185.4" y="394.1" width="1" height="1" fill-opacity="0.36"/><rect x="1171.3" y="394.6" width="1" height="1" fill-opacity="0.57"/><rect x="1152.4" y="393.6" width="1" height="1" fill-opacity="0.94"/><rect x="1170.8" y="392.8" width="1" height="1" fill-opacity="0.85"/><rect x="1216.2" y="386.5" width="1" height="1" fill-opacity="0.78"/><rect x="1220.9" y="388.7" width="1" height="1" fill-opacity="0.93"/><rect x="1170.5" y="395.2" width="1" height="1" fill-opacity="0.78"/><rect x="1199.8" y="390.1" width="1" height="1" fill-opacity="0.50"/><rect x="1136.5" y="394.1" width="1" height="1" fill-opacity="0.77"/><rect x="1223.5" y="385.2" width="1" height="1" fill-opacity="0.87"/><rect x="1149.5" y="395.3" width="1" height="1" fill-opacity="0.40"/><rect x="1125.8" y="391.3" width="1" height="1" fill-opacity="0.56"/><rect x="1184.8" y="392.6" width="1" height="1" fill-opacity="0.55"/><rect x="1165.6" y="394.3" width="1" height="1" fill-opacity="0.70"/><rect x="1235.4" y="384.9" width="1" height="1" fill-opacity="0.42"/><rect x="1146.3" y="393.6" width="1" height="1" fill-opacity="0.88"/><rect x="1232.2" y="388.0" width="1" height="1" fill-opacity="0.57"/><rect x="1210.8" y="387.0" width="1" height="1" fill-opacity="0.76"/><rect x="1195.0" y="390.1" width="1" height="1" fill-opacity="0.80"/><rect x="1236.7" y="379.7" width="1" height="1" fill-opacity="0.42"/><rect x="1172.6" y="396.0" width="1" height="1" fill-opacity="0.76"/><rect x="1183.8" y="395.4" width="1" height="1" fill-opacity="0.73"/><rect x="1136.6" y="392.3" width="1" height="1" fill-opacity="0.42"/><rect x="1233.8" y="385.5" width="1" height="1" fill-opacity="0.78"/><rect x="1185.5" y="391.6" width="1" height="1" fill-opacity="0.62"/><rect x="1151.3" y="394.7" width="1" height="1" fill-opacity="0.78"/><rect x="1206.3" y="388.3" width="1" height="1" fill-opacity="0.57"/><rect x="1143.7" y="395.7" width="1" height="1" fill-opacity="0.38"/><rect x="1175.1" y="396.6" width="1" height="1" fill-opacity="0.56"/><rect x="1152.4" y="395.3" width="1" height="1" fill-opacity="0.81"/><rect x="1156.4" y="393.8" width="1" height="1" fill-opacity="0.51"/><rect x="1127.7" y="393.1" width="1" height="1" fill-opacity="0.79"/><rect x="1136.4" y="394.3" width="1" height="1" fill-opacity="0.80"/><rect x="1216.7" y="384.5" width="1" height="1" fill-opacity="0.44"/><rect x="1162.2" y="396.0" width="1" height="1" fill-opacity="0.69"/><rect x="1138.0" y="395.4" width="1" height="1" fill-opacity="0.37"/><rect x="1217.2" y="384.4" width="1" height="1" fill-opacity="0.58"/><rect x="1179.8" y="391.9" width="1" height="1" fill-opacity="0.94"/><rect x="1198.3" y="394.9" width="1" height="1" fill-opacity="0.64"/><rect x="1187.6" y="392.4" width="1" height="1" fill-opacity="0.81"/><rect x="1194.2" y="391.6" width="1" height="1" fill-opacity="0.63"/><rect x="1136.6" y="393.4" width="1" height="1" fill-opacity="0.65"/><rect x="1192.1" y="392.6" width="1" height="1" fill-opacity="0.93"/><rect x="1228.9" y="388.5" width="1" height="1" fill-opacity="0.72"/><rect x="1120.1" y="391.6" width="1" height="1" fill-opacity="0.40"/><rect x="1180.5" y="392.7" width="1" height="1" fill-opacity="0.87"/><rect x="1201.7" y="393.9" width="1" height="1" fill-opacity="0.71"/><rect x="1232.0" y="379.8" width="1" height="1" fill-opacity="0.56"/><rect x="1217.6" y="386.0" width="1" height="1" fill-opacity="0.61"/><rect x="1208.0" y="389.4" width="1" height="1" fill-opacity="0.38"/><rect x="1123.9" y="392.1" width="1" height="1" fill-opacity="0.65"/><rect x="1199.5" y="390.1" width="1" height="1" fill-opacity="0.74"/><rect x="1148.2" y="394.7" width="1" height="1" fill-opacity="0.59"/><rect x="1137.0" y="392.3" width="1" height="1" fill-opacity="0.57"/><rect x="1156.7" y="394.0" width="1" height="1" fill-opacity="0.48"/><rect x="1115.8" y="391.2" width="1" height="1" fill-opacity="0.44"/><rect x="1169.7" y="395.1" width="1" height="1" fill-opacity="0.45"/><rect x="1162.5" y="394.6" width="1" height="1" fill-opacity="0.42"/><rect x="1133.6" y="393.1" width="1" height="1" fill-opacity="0.36"/><rect x="1166.3" y="395.5" width="1" height="1" fill-opacity="0.38"/><rect x="1162.1" y="394.5" width="1" height="1" fill-opacity="0.93"/><rect x="1141.1" y="394.4" width="1" height="1" fill-opacity="0.45"/><rect x="1190.1" y="393.0" width="1" height="1" fill-opacity="0.38"/><rect x="1204.2" y="393.8" width="1" height="1" fill-opacity="0.63"/><rect x="1233.0" y="385.5" width="1" height="1" fill-opacity="0.51"/><rect x="1215.8" y="386.1" width="1" height="1" fill-opacity="0.41"/><rect x="1200.0" y="390.5" width="1" height="1" fill-opacity="0.35"/><rect x="1119.0" y="390.9" width="1" height="1" fill-opacity="0.37"/><rect x="1119.5" y="389.8" width="1" height="1" fill-opacity="0.47"/><rect x="1237.1" y="382.8" width="1" height="1" fill-opacity="0.90"/><rect x="1235.3" y="383.9" width="1" height="1" fill-opacity="0.71"/><rect x="1236.1" y="384.3" width="1" height="1" fill-opacity="0.86"/><rect x="1127.0" y="392.8" width="1" height="1" fill-opacity="0.76"/><rect x="1233.6" y="387.6" width="1" height="1" fill-opacity="0.79"/><rect x="1216.9" y="385.2" width="1" height="1" fill-opacity="0.57"/><rect x="1164.0" y="396.9" width="1" height="1" fill-opacity="0.64"/><rect x="1146.9" y="395.8" width="1" height="1" fill-opacity="0.71"/><rect x="1201.2" y="392.0" width="1" height="1" fill-opacity="0.44"/><rect x="1203.6" y="390.7" width="1" height="1" fill-opacity="0.81"/><rect x="1198.5" y="392.0" width="1" height="1" fill-opacity="0.86"/><rect x="1194.8" y="389.0" width="1" height="1" fill-opacity="0.62"/><rect x="1228.0" y="382.7" width="1" height="1" fill-opacity="0.57"/><rect x="1120.6" y="392.8" width="1" height="1" fill-opacity="0.41"/><rect x="1183.8" y="393.5" width="1" height="1" fill-opacity="0.74"/><rect x="1143.2" y="394.1" width="1" height="1" fill-opacity="0.74"/><rect x="1186.4" y="392.8" width="1" height="1" fill-opacity="0.93"/><rect x="1138.9" y="393.2" width="1" height="1" fill-opacity="0.82"/><rect x="1188.4" y="390.1" width="1" height="1" fill-opacity="0.46"/><rect x="1137.1" y="394.2" width="1" height="1" fill-opacity="0.42"/><rect x="1118.4" y="390.5" width="1" height="1" fill-opacity="0.89"/><rect x="1123.7" y="391.9" width="1" height="1" fill-opacity="0.85"/><rect x="1188.2" y="389.7" width="1" height="1" fill-opacity="0.87"/><rect x="1154.2" y="393.4" width="1" height="1" fill-opacity="0.42"/><rect x="1217.6" y="384.6" width="1" height="1" fill-opacity="0.47"/><rect x="1177.7" y="394.0" width="1" height="1" fill-opacity="0.40"/><rect x="1154.8" y="394.4" width="1" height="1" fill-opacity="0.68"/><rect x="1204.1" y="391.3" width="1" height="1" fill-opacity="0.71"/><rect x="1137.0" y="396.6" width="1" height="1" fill-opacity="0.55"/><rect x="1166.5" y="394.8" width="1" height="1" fill-opacity="0.45"/><rect x="1232.6" y="378.5" width="1" height="1" fill-opacity="0.94"/><rect x="1190.4" y="391.3" width="1" height="1" fill-opacity="0.60"/><rect x="1237.9" y="379.4" width="1" height="1" fill-opacity="0.64"/><rect x="1207.4" y="393.1" width="1" height="1" fill-opacity="0.90"/><rect x="1149.4" y="393.9" width="1" height="1" fill-opacity="0.41"/><rect x="1203.5" y="392.6" width="1" height="1" fill-opacity="0.73"/><rect x="1119.5" y="390.3" width="1" height="1" fill-opacity="0.61"/><rect x="1155.0" y="392.1" width="1" height="1" fill-opacity="0.52"/><rect x="1126.2" y="393.0" width="1" height="1" fill-opacity="0.40"/><rect x="1132.4" y="391.4" width="1" height="1" fill-opacity="0.94"/><rect x="1240.9" y="380.0" width="1" height="1" fill-opacity="0.45"/><rect x="1149.6" y="394.6" width="1" height="1" fill-opacity="0.68"/><rect x="1157.5" y="393.4" width="1" height="1" fill-opacity="0.63"/><rect x="1227.1" y="383.4" width="1" height="1" fill-opacity="0.50"/><rect x="1216.1" y="388.0" width="1" height="1" fill-opacity="0.67"/><rect x="1179.3" y="393.9" width="1" height="1" fill-opacity="0.47"/><rect x="1207.1" y="390.3" width="1" height="1" fill-opacity="0.82"/><rect x="1240.7" y="382.2" width="1" height="1" fill-opacity="0.36"/><rect x="1165.7" y="394.6" width="1" height="1" fill-opacity="0.68"/><rect x="1125.1" y="392.6" width="1" height="1" fill-opacity="0.83"/><rect x="1164.1" y="394.7" width="1" height="1" fill-opacity="0.61"/><rect x="1189.9" y="388.2" width="1" height="1" fill-opacity="0.84"/><rect x="1144.6" y="395.4" width="1" height="1" fill-opacity="0.82"/><rect x="1176.4" y="391.8" width="1" height="1" fill-opacity="0.52"/><rect x="1135.8" y="393.3" width="1" height="1" fill-opacity="0.89"/><rect x="1227.7" y="385.4" width="1" height="1" fill-opacity="0.91"/><rect x="1215.5" y="386.2" width="1" height="1" fill-opacity="0.66"/><rect x="1135.1" y="394.6" width="1" height="1" fill-opacity="0.95"/><rect x="1179.6" y="394.2" width="1" height="1" fill-opacity="0.62"/><rect x="1212.0" y="389.7" width="1" height="1" fill-opacity="0.44"/><rect x="1150.2" y="394.1" width="1" height="1" fill-opacity="0.86"/><rect x="1219.9" y="385.9" width="1" height="1" fill-opacity="0.37"/><rect x="1182.8" y="392.2" width="1" height="1" fill-opacity="0.52"/><rect x="1202.6" y="389.9" width="1" height="1" fill-opacity="0.75"/><rect x="1155.8" y="394.1" width="1" height="1" fill-opacity="0.93"/><rect x="1194.2" y="396.0" width="1" height="1" fill-opacity="0.46"/><rect x="1160.3" y="393.2" width="1" height="1" fill-opacity="0.51"/><rect x="1236.7" y="382.2" width="1" height="1" fill-opacity="0.59"/><rect x="1148.1" y="394.8" width="1" height="1" fill-opacity="0.94"/><rect x="1123.9" y="392.3" width="1" height="1" fill-opacity="0.40"/><rect x="1177.8" y="390.1" width="1" height="1" fill-opacity="0.73"/><rect x="1218.0" y="387.6" width="1" height="1" fill-opacity="0.93"/><rect x="1122.6" y="392.4" width="1" height="1" fill-opacity="0.51"/><rect x="1181.3" y="393.6" width="1" height="1" fill-opacity="0.92"/><rect x="1131.9" y="392.4" width="1" height="1" fill-opacity="0.95"/><rect x="1197.0" y="390.3" width="1" height="1" fill-opacity="0.38"/><rect x="1209.3" y="390.5" width="1" height="1" fill-opacity="0.84"/><rect x="1227.9" y="387.6" width="1" height="1" fill-opacity="0.67"/><rect x="1160.6" y="395.3" width="1" height="1" fill-opacity="0.94"/><rect x="1147.8" y="394.7" width="1" height="1" fill-opacity="0.43"/><rect x="1156.4" y="394.1" width="1" height="1" fill-opacity="0.47"/><rect x="1237.6" y="383.3" width="1" height="1" fill-opacity="0.50"/><rect x="1157.6" y="393.9" width="1" height="1" fill-opacity="0.77"/><rect x="1152.3" y="394.4" width="1" height="1" fill-opacity="0.80"/><rect x="1210.8" y="387.5" width="1" height="1" fill-opacity="0.67"/><rect x="1165.0" y="393.5" width="1" height="1" fill-opacity="0.47"/><rect x="1188.9" y="391.1" width="1" height="1" fill-opacity="0.46"/><rect x="1238.1" y="381.1" width="1" height="1" fill-opacity="0.51"/><rect x="1141.1" y="394.5" width="1" height="1" fill-opacity="0.60"/><rect x="1224.9" y="386.1" width="1" height="1" fill-opacity="0.87"/><rect x="1215.5" y="388.1" width="1" height="1" fill-opacity="0.67"/><rect x="1211.1" y="390.6" width="1" height="1" fill-opacity="0.61"/><rect x="1130.6" y="392.3" width="1" height="1" fill-opacity="0.65"/><rect x="1158.1" y="395.6" width="1" height="1" fill-opacity="0.71"/><rect x="1242.4" y="379.7" width="1" height="1" fill-opacity="0.85"/><rect x="1149.0" y="394.0" width="1" height="1" fill-opacity="0.42"/><rect x="1174.5" y="392.2" width="1" height="1" fill-opacity="0.74"/><rect x="1148.8" y="393.9" width="1" height="1" fill-opacity="0.64"/><rect x="1181.0" y="389.8" width="1" height="1" fill-opacity="0.67"/><rect x="1166.7" y="393.8" width="1" height="1" fill-opacity="0.61"/><rect x="1221.2" y="385.8" width="1" height="1" fill-opacity="0.86"/><rect x="1161.0" y="394.2" width="1" height="1" fill-opacity="0.48"/><rect x="1181.7" y="392.0" width="1" height="1" fill-opacity="0.87"/><rect x="1201.7" y="391.8" width="1" height="1" fill-opacity="0.65"/><rect x="1160.5" y="395.9" width="1" height="1" fill-opacity="0.88"/><rect x="1185.9" y="393.8" width="1" height="1" fill-opacity="0.57"/><rect x="1189.7" y="392.9" width="1" height="1" fill-opacity="0.54"/><rect x="1149.0" y="394.4" width="1" height="1" fill-opacity="0.90"/><rect x="1178.7" y="390.1" width="1" height="1" fill-opacity="0.85"/><rect x="1228.7" y="385.8" width="1" height="1" fill-opacity="0.42"/><rect x="1224.8" y="387.5" width="1" height="1" fill-opacity="0.88"/><rect x="1148.8" y="396.4" width="1" height="1" fill-opacity="0.71"/><rect x="1125.6" y="391.9" width="1" height="1" fill-opacity="0.35"/><rect x="1219.4" y="388.9" width="1" height="1" fill-opacity="0.58"/><rect x="1174.5" y="394.6" width="1" height="1" fill-opacity="0.75"/><rect x="1169.1" y="396.7" width="1" height="1" fill-opacity="0.76"/><rect x="1122.4" y="392.3" width="1" height="1" fill-opacity="0.95"/><rect x="1123.7" y="391.5" width="1" height="1" fill-opacity="0.60"/><rect x="1228.3" y="383.1" width="1" height="1" fill-opacity="0.60"/><rect x="1185.8" y="391.9" width="1" height="1" fill-opacity="0.59"/><rect x="1124.7" y="391.7" width="1" height="1" fill-opacity="0.91"/><rect x="1177.1" y="393.2" width="1" height="1" fill-opacity="0.49"/><rect x="1171.5" y="392.4" width="1" height="1" fill-opacity="0.52"/><rect x="1239.6" y="378.9" width="1" height="1" fill-opacity="0.47"/><rect x="1150.0" y="393.8" width="1" height="1" fill-opacity="0.67"/><rect x="1188.9" y="394.8" width="1" height="1" fill-opacity="0.90"/><rect x="1222.5" y="384.7" width="1" height="1" fill-opacity="0.39"/><rect x="1165.7" y="395.2" width="1" height="1" fill-opacity="0.87"/><rect x="1140.9" y="391.3" width="1" height="1" fill-opacity="0.42"/><rect x="1229.9" y="385.4" width="1" height="1" fill-opacity="0.46"/><rect x="1118.0" y="390.9" width="1" height="1" fill-opacity="0.86"/><rect x="1220.3" y="387.9" width="1" height="1" fill-opacity="0.58"/><rect x="1135.1" y="394.0" width="1" height="1" fill-opacity="0.77"/><rect x="1155.2" y="395.0" width="1" height="1" fill-opacity="0.62"/><rect x="1182.9" y="395.9" width="1" height="1" fill-opacity="0.48"/><rect x="1196.3" y="390.4" width="1" height="1" fill-opacity="0.80"/><rect x="1159.6" y="393.8" width="1" height="1" fill-opacity="0.73"/><rect x="1169.2" y="395.1" width="1" height="1" fill-opacity="0.87"/><rect x="1172.4" y="393.2" width="1" height="1" fill-opacity="0.89"/><rect x="1199.3" y="394.7" width="1" height="1" fill-opacity="0.94"/><rect x="1156.6" y="394.3" width="1" height="1" fill-opacity="0.46"/><rect x="1202.1" y="393.2" width="1" height="1" fill-opacity="0.70"/><rect x="1124.7" y="391.9" width="1" height="1" fill-opacity="0.64"/><rect x="1180.4" y="391.9" width="1" height="1" fill-opacity="0.65"/><rect x="1185.6" y="391.6" width="1" height="1" fill-opacity="0.41"/><rect x="1208.2" y="388.5" width="1" height="1" fill-opacity="0.89"/><rect x="1222.9" y="383.5" width="1" height="1" fill-opacity="0.85"/><rect x="1207.3" y="389.8" width="1" height="1" fill-opacity="0.76"/><rect x="1204.8" y="391.8" width="1" height="1" fill-opacity="0.69"/><rect x="1143.1" y="392.5" width="1" height="1" fill-opacity="0.58"/><rect x="1126.3" y="392.0" width="1" height="1" fill-opacity="0.78"/><rect x="1133.9" y="393.6" width="1" height="1" fill-opacity="0.59"/><rect x="1184.7" y="393.3" width="1" height="1" fill-opacity="0.64"/><rect x="1137.2" y="393.5" width="1" height="1" fill-opacity="0.41"/><rect x="1181.5" y="391.7" width="1" height="1" fill-opacity="0.66"/><rect x="1162.4" y="394.8" width="1" height="1" fill-opacity="0.54"/><rect x="1236.7" y="387.6" width="1" height="1" fill-opacity="0.64"/><rect x="1165.9" y="398.2" width="1" height="1" fill-opacity="0.46"/><rect x="1182.9" y="392.9" width="1" height="1" fill-opacity="0.48"/><rect x="1241.4" y="377.4" width="1" height="1" fill-opacity="0.89"/><rect x="1125.4" y="390.6" width="1" height="1" fill-opacity="0.49"/><rect x="1170.1" y="393.8" width="1" height="1" fill-opacity="0.81"/><rect x="1133.2" y="392.4" width="1" height="1" fill-opacity="0.66"/><rect x="1159.8" y="392.6" width="1" height="1" fill-opacity="0.65"/><rect x="1197.2" y="392.6" width="1" height="1" fill-opacity="0.50"/><rect x="1179.2" y="392.4" width="1" height="1" fill-opacity="0.38"/><rect x="1133.7" y="392.6" width="1" height="1" fill-opacity="0.80"/><rect x="1177.4" y="392.7" width="1" height="1" fill-opacity="0.79"/><rect x="1159.9" y="394.9" width="1" height="1" fill-opacity="0.80"/><rect x="1231.8" y="385.6" width="1" height="1" fill-opacity="0.94"/><rect x="1204.2" y="390.0" width="1" height="1" fill-opacity="0.44"/><rect x="1179.4" y="391.2" width="1" height="1" fill-opacity="0.45"/><rect x="1128.6" y="391.3" width="1" height="1" fill-opacity="0.43"/><rect x="1117.6" y="390.8" width="1" height="1" fill-opacity="0.58"/><rect x="1170.5" y="394.0" width="1" height="1" fill-opacity="0.51"/><rect x="1201.9" y="390.6" width="1" height="1" fill-opacity="0.77"/><rect x="1135.7" y="393.4" width="1" height="1" fill-opacity="0.55"/><rect x="1240.5" y="385.0" width="1" height="1" fill-opacity="0.58"/><rect x="1213.6" y="389.1" width="1" height="1" fill-opacity="0.55"/><rect x="1138.6" y="394.3" width="1" height="1" fill-opacity="0.56"/><rect x="1140.8" y="394.0" width="1" height="1" fill-opacity="0.54"/><rect x="1182.4" y="392.2" width="1" height="1" fill-opacity="0.52"/><rect x="1118.8" y="390.7" width="1" height="1" fill-opacity="0.47"/><rect x="1183.2" y="396.1" width="1" height="1" fill-opacity="0.71"/><rect x="1195.6" y="389.0" width="1" height="1" fill-opacity="0.61"/><rect x="1152.6" y="395.2" width="1" height="1" fill-opacity="0.65"/><rect x="1127.6" y="391.5" width="1" height="1" fill-opacity="0.72"/><rect x="1170.0" y="398.6" width="1" height="1" fill-opacity="0.45"/><rect x="1158.3" y="394.4" width="1" height="1" fill-opacity="0.65"/><rect x="1171.9" y="397.7" width="1" height="1" fill-opacity="0.60"/><rect x="1116.2" y="390.3" width="1" height="1" fill-opacity="0.78"/><rect x="1224.5" y="385.5" width="1" height="1" fill-opacity="0.76"/><rect x="1149.2" y="394.4" width="1" height="1" fill-opacity="0.53"/><rect x="1129.6" y="392.3" width="1" height="1" fill-opacity="0.93"/><rect x="1120.6" y="390.9" width="1" height="1" fill-opacity="0.40"/><rect x="1204.9" y="388.8" width="1" height="1" fill-opacity="0.66"/><rect x="1193.1" y="393.5" width="1" height="1" fill-opacity="0.66"/><rect x="1238.0" y="382.6" width="1" height="1" fill-opacity="0.76"/><rect x="1230.7" y="385.8" width="1" height="1" fill-opacity="0.69"/><rect x="1159.2" y="394.8" width="1" height="1" fill-opacity="0.37"/><rect x="1150.2" y="393.2" width="1" height="1" fill-opacity="0.63"/><rect x="1143.3" y="395.4" width="1" height="1" fill-opacity="0.80"/><rect x="1235.9" y="383.0" width="1" height="1" fill-opacity="0.55"/><rect x="1121.6" y="392.4" width="1" height="1" fill-opacity="0.72"/><rect x="1142.8" y="394.4" width="1" height="1" fill-opacity="0.46"/><rect x="1174.6" y="397.3" width="1" height="1" fill-opacity="0.69"/><rect x="1154.2" y="394.5" width="1" height="1" fill-opacity="0.79"/><rect x="1206.5" y="392.1" width="1" height="1" fill-opacity="0.51"/><rect x="1140.1" y="394.4" width="1" height="1" fill-opacity="0.71"/><rect x="1193.0" y="390.9" width="1" height="1" fill-opacity="0.81"/><rect x="1170.7" y="395.3" width="1" height="1" fill-opacity="0.61"/><rect x="1136.4" y="394.4" width="1" height="1" fill-opacity="0.78"/><rect x="1231.6" y="389.4" width="1" height="1" fill-opacity="0.83"/><rect x="1203.2" y="390.2" width="1" height="1" fill-opacity="0.82"/><rect x="1229.7" y="387.2" width="1" height="1" fill-opacity="0.92"/><rect x="1150.4" y="392.0" width="1" height="1" fill-opacity="0.61"/><rect x="1131.8" y="394.6" width="1" height="1" fill-opacity="0.60"/><rect x="1148.9" y="395.4" width="1" height="1" fill-opacity="0.50"/><rect x="1118.0" y="390.2" width="1" height="1" fill-opacity="0.58"/><rect x="1239.4" y="383.1" width="1" height="1" fill-opacity="0.88"/><rect x="1143.4" y="396.6" width="1" height="1" fill-opacity="0.49"/><rect x="1228.2" y="386.7" width="1" height="1" fill-opacity="0.48"/><rect x="1178.8" y="392.6" width="1" height="1" fill-opacity="0.65"/><rect x="1150.9" y="391.7" width="1" height="1" fill-opacity="0.80"/><rect x="1218.1" y="388.3" width="1" height="1" fill-opacity="0.47"/><rect x="1135.0" y="392.5" width="1" height="1" fill-opacity="0.90"/><rect x="1182.9" y="394.4" width="1" height="1" fill-opacity="0.38"/><rect x="1229.1" y="386.8" width="1" height="1" fill-opacity="0.92"/><rect x="1138.7" y="393.0" width="1" height="1" fill-opacity="0.75"/><rect x="1127.9" y="391.6" width="1" height="1" fill-opacity="0.56"/><rect x="1193.9" y="390.7" width="1" height="1" fill-opacity="0.42"/><rect x="1186.7" y="393.5" width="1" height="1" fill-opacity="0.56"/><rect x="1133.9" y="393.6" width="1" height="1" fill-opacity="0.54"/><rect x="1179.2" y="394.2" width="1" height="1" fill-opacity="0.52"/><rect x="1173.0" y="392.1" width="1" height="1" fill-opacity="0.81"/><rect x="1172.8" y="394.6" width="1" height="1" fill-opacity="0.86"/><rect x="1170.8" y="395.3" width="1" height="1" fill-opacity="0.86"/><rect x="1158.1" y="395.4" width="1" height="1" fill-opacity="0.36"/><rect x="1178.9" y="393.6" width="1" height="1" fill-opacity="0.62"/><rect x="1170.8" y="392.9" width="1" height="1" fill-opacity="0.94"/><rect x="1128.3" y="391.9" width="1" height="1" fill-opacity="0.83"/><rect x="1146.2" y="394.7" width="1" height="1" fill-opacity="0.85"/><rect x="1223.3" y="382.0" width="1" height="1" fill-opacity="0.38"/><rect x="1160.9" y="395.9" width="1" height="1" fill-opacity="0.62"/><rect x="1208.1" y="381.7" width="1" height="1" fill-opacity="0.76"/><rect x="1224.6" y="385.4" width="1" height="1" fill-opacity="0.88"/><rect x="1127.1" y="392.8" width="1" height="1" fill-opacity="0.52"/><rect x="1196.6" y="391.7" width="1" height="1" fill-opacity="0.78"/><rect x="1116.3" y="390.7" width="1" height="1" fill-opacity="0.48"/><rect x="1201.4" y="387.6" width="1" height="1" fill-opacity="0.81"/><rect x="1201.4" y="390.8" width="1" height="1" fill-opacity="0.67"/><rect x="1238.9" y="385.7" width="1" height="1" fill-opacity="0.43"/><rect x="1219.7" y="387.6" width="1" height="1" fill-opacity="0.75"/><rect x="1130.1" y="391.0" width="1" height="1" fill-opacity="0.87"/><rect x="1147.5" y="394.9" width="1" height="1" fill-opacity="0.89"/><rect x="1165.5" y="395.4" width="1" height="1" fill-opacity="0.77"/><rect x="1150.8" y="396.2" width="1" height="1" fill-opacity="0.82"/><rect x="1151.6" y="395.5" width="1" height="1" fill-opacity="0.79"/></g><g fill="none" stroke-linecap="round">
<path d="M1108 424.5Q1150 430 1175 439Q1210 441 1242 424" stroke="#b0b0b0" stroke-width="2.2" opacity="0.9"/><path d="M1180 438.5Q1212 440 1242 424" stroke="#c0c0c0" stroke-width="3.6"/>
<defs><linearGradient id="bs4" gradientUnits="userSpaceOnUse" x1="1100" y1="0" x2="1242" y2="0"><stop offset="0" stop-color="#444"/><stop offset="0.5" stop-color="#6a6a6a"/><stop offset="1" stop-color="#bdbdbd"/></linearGradient></defs><path d="M1100 470Q1128 460 1160 470Q1185 482 1242 465" stroke="url(#bs4)" stroke-width="4"/>
</g>
<g fill="#e8e8e8" stroke="none">
<path d="M1024.5 393L1028 402H1021Z"/>
<path d="M1021 427L1029 417L1030 418L1024 428Z"/>
<path d="M1021 451L1027 443L1030 441L1031 442L1029 445L1023 452Z"/>
<path d="M1021 472L1027 464L1030 462L1032 464L1030 467L1023 473Z"/>
</g>
<g fill="none" stroke="#e0e0e0" stroke-width="1.2">
<rect x="1047" y="577" width="8" height="8.5" fill="#e8e8e8"/>
<path d="M1045 575V583M1045 575H1053"/>
</g>
<text x="1167.5" y="585" font-family="Liberation Sans" font-style="italic" font-size="12" fill="#d0d0d0">fx</text>
<g fill="#e8e8e8">
<circle cx="1096.1" cy="709.3" r="6" fill="none" stroke="#e8e8e8" stroke-width="1.5"/>
<path d="M1100.3 705.1A6 6 0 0 1 1091.9 713.5Z"/>
<rect x="1113" y="703.5" width="12.5" height="11"/><circle cx="1119.2" cy="709" r="3" fill="#333"/>
<rect x="1136" y="703.5" width="11.5" height="11.5"/><path d="M1141.7 705.5V713M1138 709.3H1145.5" stroke="#333" stroke-width="1.6"/>
<path d="M1158.5 704H1163L1164.5 705.5H1170V715H1158.5Z"/>
<path d="M1182 706H1192.5M1185 706V704.5H1189.5V706M1183 707.5L1184 715.5H1190.5L1191.5 707.5Z"/>
</g>
<g stroke="#333" stroke-width="0.9"><path d="M1158.5 708.5H1170M1185.8 709V714M1187.3 709V714M1188.8 709V714"/></g>
</svg>


<!-- DIALOG -->
<div class="a" style="left:903px;top:86px;width:272px;height:301px;background:#3b3b3b"></div>
<div class="a" style="left:903px;top:86px;width:272px;height:20px;background:#323232;border-bottom:1px solid #2a2a2a"></div>
<div class="t" style="left:908px;top:90.5px;font-size:10px;color:#f0f0f0;transform:scaleX(0.945);transform-origin:0 0">生成预览</div>
<svg class="a" style="left:0;top:0" width="1267" height="723">
<path d="M1159 90L1169 100.3M1169 90L1159 100.3" stroke="#eee" stroke-width="1.6"/>
</svg>
<div class="a" style="left:907.3px;top:113px;width:263px;height:212px;background:#2c2c2c;border-radius:0 0 4px 4px"></div>
<svg class="a" style="left:908.4px;top:113.8px" width="261" height="194"><defs>
<linearGradient id="sky" x1="0" y1="0" x2="0" y2="1"><stop offset="0" stop-color="#6fa3d6"/><stop offset="0.45" stop-color="#8fbbe2"/><stop offset="0.62" stop-color="#a8cbe6"/></linearGradient>
<linearGradient id="grass" x1="0" y1="0" x2="0" y2="1"><stop offset="0" stop-color="#94b066"/><stop offset="1" stop-color="#76964c"/></linearGradient>
<linearGradient id="robe" x1="0" y1="0" x2="1" y2="1"><stop offset="0" stop-color="#4e5366"/><stop offset="0.6" stop-color="#3a3e50"/><stop offset="1" stop-color="#2a2d3a"/></linearGradient>
<linearGradient id="arm" x1="0" y1="0" x2="0" y2="1"><stop offset="0" stop-color="#5a6078"/><stop offset="1" stop-color="#343a50"/></linearGradient>
<radialGradient id="face" cx="0.45" cy="0.45" r="0.6"><stop offset="0" stop-color="#f8dcc8"/><stop offset="1" stop-color="#e4b096"/></radialGradient>
<linearGradient id="path" x1="0" y1="0" x2="0" y2="1"><stop offset="0" stop-color="#c8aa84"/><stop offset="1" stop-color="#b8946c"/></linearGradient>
<filter id="bl1" x="-20%" y="-20%" width="140%" height="140%"><feGaussianBlur stdDeviation="1.4"/></filter>
<filter id="bl3" x="-20%" y="-20%" width="140%" height="140%"><feGaussianBlur stdDeviation="2.2"/></filter>
<filter id="bl2" x="-20%" y="-20%" width="140%" height="140%"><feGaussianBlur stdDeviation="0.45"/></filter>
<clipPath id="imgclip"><rect x="0" y="0" width="261" height="194"/></clipPath>
</defs>
<g clip-path="url(#imgclip)">
<rect x="-10" y="-10" width="281" height="214" fill="url(#sky)"/>
<g filter="url(#bl1)" fill="#edf0f5">
<ellipse cx="158" cy="21" rx="36" ry="5"/>
<ellipse cx="222" cy="15" rx="38" ry="12.5"/>
<ellipse cx="212" cy="46" rx="15" ry="3.5"/>
<ellipse cx="176" cy="57" rx="14" ry="3.5"/>
<ellipse cx="258" cy="45" rx="7" ry="3.5"/>
</g>
<g filter="url(#bl3)">
<path d="M135 104L170 92L205 80L235 68L258 60L271 58V150H135Z" fill="#5b8296"/>
<path d="M190 112L230 100L271 96V150H190Z" fill="#5f8486"/>
</g>
<g filter="url(#bl3)">
<path d="M-10 92L130 97L200 106L271 118V204H-10Z" fill="url(#grass)"/>
<path d="M-10 93Q60 90 110 100L160 114L271 132V204H-10Z" fill="#8eac5e"/>
<ellipse cx="173" cy="98" rx="7" ry="14" fill="#4a703c"/>
<ellipse cx="196" cy="103" rx="6" ry="13" fill="#4e743e"/>
<ellipse cx="222" cy="108" rx="8" ry="15" fill="#50763e"/>
<ellipse cx="244" cy="113" rx="8" ry="14" fill="#54783e"/>
<path d="M28 204L31 194Q40 160 40 132Q36 123 50 119Q70 115 84 113L86 124Q70 126 62 129Q66 140 76 156Q88 176 92 194L94 204Z" fill="url(#path)"/>
<path d="M150 150Q200 162 250 182L271 190V204H150Z" fill="#bc9a72"/>
<path d="M-10 112Q22 118 34 132Q30 170 26 204H-10Z" fill="#6a9442"/>
<path d="M52 118Q75 114 92 124L95 132Q70 134 52 124Z" fill="#7c9c50"/>
<path d="M190 138Q230 140 271 144V190Q240 180 210 168Q195 155 190 138Z" fill="#6e9444"/>
</g>
<g filter="url(#bl2)" fill="#e4a070" opacity="0.75">
<circle cx="5" cy="118" r="1.3"/><circle cx="12" cy="124" r="1.3"/><circle cx="3" cy="132" r="1.2"/><circle cx="20" cy="118" r="1.2"/><circle cx="8" cy="140" r="1.1"/><circle cx="230" cy="150" r="1.1"/><circle cx="245" cy="158" r="1.1"/><circle cx="218" cy="146" r="1"/>
</g>
<g filter="url(#bl1)">
<path d="M-8 46L0 44Q8 38 11 23Q36 20 59 21Q66 36 86 42L80 50H-8Z" fill="#54545c"/>
<path d="M11 23Q36 20 59 21" stroke="#a86448" stroke-width="2.6" fill="none"/>
<path d="M59 21Q66 37 86 42" stroke="#b86e4e" stroke-width="2.6" fill="none"/>
<path d="M11 23Q8 38 0 44" stroke="#b06a4a" stroke-width="2.6" fill="none"/>
<path d="M-6 50H78L77 88H-6Z" fill="#a03c34"/>
<rect x="3" y="50" width="75" height="4" fill="#6a2a26"/>
<rect x="12.7" y="60" width="12" height="15" fill="#86686a"/>
<rect x="51" y="58.5" width="12" height="15" fill="#86686a"/>
<rect x="31" y="58" width="16" height="28" fill="#923630"/>
<rect x="-6" y="86" width="86" height="8" fill="#a2a296"/>
</g>
<g filter="url(#bl2)">
<path d="M111 21Q96 24 90 38Q85 60 84 85Q80 100 72 108Q92 112 104 104Q112 95 110 60Q108 40 114 30Z" fill="#2a1c20"/>
<path d="M97 194L101 160Q96 130 104 114L126 103L141 103L151 111Q168 116 172 119L193 122L190 146L157 143L165 168L177 194Z" fill="url(#robe)"/>
<path d="M151 111L172 119L194 121.8L190.3 145.5L156 143Z" fill="url(#arm)"/>
<path d="M104 114Q84 124 77 134Q68 150 72 162Q80 172 96 176L104 168Q90 158 92 150Q96 136 110 128Z" fill="#42485f"/>
<path d="M96 176Q103 175 106 166L100 164Q96 170 92 174Z" fill="#e6b896"/>
<path d="M114 104L136.5 124.4L141 103" fill="none" stroke="#2c3042" stroke-width="1"/>
<path d="M111 158L156 152.5L156.5 157.5L111.5 163Z" fill="#5a4434"/>
<path d="M151 156L155 156L156.5 194H152.5Z" fill="#4c3a2e"/>
<path d="M216.8 25L210 113.3L199 113.3L206 39Z" fill="#9c9ea2"/>
<path d="M216.8 25L210 113.3L205.5 113.3L210.5 36Z" fill="#c2c4c6"/>
<path d="M186.6 113.3Q200 110.5 213 114.2L211 116.5L187 116.5Z" fill="#8c8c8e"/>
<rect x="197.6" y="116" width="5.4" height="24.7" rx="2.7" fill="#2a2628"/>
<ellipse cx="200" cy="126" rx="5.5" ry="7" fill="#e4b292"/>
<rect x="126" y="92" width="11" height="12" fill="#e2ae90"/>
<ellipse cx="129" cy="74" rx="27.5" ry="20.5" fill="url(#face)"/>
<ellipse cx="101.5" cy="73" rx="3" ry="4" fill="#e8b89a"/>
<ellipse cx="128" cy="70" rx="24" ry="20" fill="url(#face)"/><path d="M98 72Q94 34 127 33Q160 34 157 70L153.6 63.5Q142 62 131 55Q122 63 111.5 67.5Q104 71 101 78Z" fill="#2c1d21"/>
<path d="M101 60Q99 90 108 117L114 117Q106 90 106 64Z" fill="#2c1d21"/>
<path d="M152 58Q156 90 163 119L166 119Q162 88 157 60Z" fill="#2c1d21"/>
<ellipse cx="114.1" cy="33.8" rx="4.5" ry="3.5" fill="#6e2c38"/>
<ellipse cx="122.3" cy="71" rx="4.4" ry="4.8" fill="#3a2018"/>
<ellipse cx="145.5" cy="71" rx="4.4" ry="4.8" fill="#3a2018"/>
<circle cx="123.8" cy="69.5" r="1.3" fill="#fff"/>
<circle cx="147" cy="69.5" r="1.3" fill="#fff"/>
<path d="M115.5 63Q122 60 128.6 61.6M140.4 62Q146 59.5 152.2 61.6" stroke="#3a2620" stroke-width="1.1" fill="none"/>
<path d="M130 88.5Q134 91 138 88.5" stroke="#b8705a" stroke-width="1.3" fill="none"/>
</g>
</g>
<rect x="6" y="6.5" width="79" height="16" rx="4" fill="#3b566e" opacity="0.92"/>
<rect x="11" y="10.5" width="2" height="8" fill="#fff"/><rect x="14.8" y="10.5" width="2" height="8" fill="#fff"/>
<text x="20" y="18.3" font-family="Liberation Sans" font-size="8.6" fill="#e6e6e6">等待画布刷新...</text>
<rect x="228.5" y="178.5" width="28" height="12" rx="2" fill="none" stroke="#c8d0b8" stroke-opacity="0.55" stroke-width="0.8"/>
<text x="231" y="187.5" font-family="Liberation Sans" font-size="7.2" fill="#d8e0c8" fill-opacity="0.6">AI生成</text>
</svg>
<div class="t" style="left:911.5px;top:311px;font-size:9px;color:#e0e0e0;transform:scaleX(0.917);transform-origin:0 0">保持特征</div>
<div class="a" style="left:950.3px;top:310.3px;width:19.5px;height:11.4px;border:1px solid #9a9a9a;border-radius:6px;background:#2c2c2c"></div>
<div class="a" style="left:951.8px;top:311.8px;width:8.4px;height:8.4px;background:#fff;border-radius:50%"></div>
<div class="t" style="left:910px;top:337px;font-size:9px;color:#e0e0e0;transform:scaleX(0.908);transform-origin:0 0">变化幅度</div>
<div class="a" style="left:952px;top:339.2px;width:184px;height:3.8px;background:#5a5a5a;border-radius:2px"></div>
<div class="a" style="left:952px;top:339.2px;width:91px;height:3.8px;background:#2f6fbf;border-radius:2px"></div>
<div class="a" style="left:1038.8px;top:336.8px;width:9px;height:9px;background:#f2f2f2;border-radius:50%"></div>
<div class="a" style="left:1140px;top:335px;width:27.6px;height:11.5px;background:#353535;border-radius:3px"></div>
<div class="t" style="left:1141.5px;top:336.5px;font-size:8.6px;color:#e8e8e8;transform:scaleX(0.983);transform-origin:0 0">50</div>
<svg class="a" style="left:0;top:0" width="1267" height="723">
<path d="M916 360.5L917.6 364L921.2 364.4L918.5 366.8L919.3 370.4L916 368.6L912.7 370.4L913.5 366.8L910.8 364.4L914.4 364Z" fill="#f0a030" stroke="#f0a030" stroke-width="1" stroke-linejoin="round"/>
<path d="M914 366.5Q916 368.5 918 366.5" stroke="#7a4a10" stroke-width="0.7" fill="none"/>
</svg>
<div class="t" style="left:926px;top:361.5px;font-size:9.2px;color:#e8e8e8;transform:scaleX(0.942);transform-origin:0 0">45,187.9 点</div>
<div class="a" style="left:1056.3px;top:356.5px;width:52px;height:19.2px;background:#0a7aff;border-radius:3px"></div>
<div class="t" style="left:1073px;top:361px;font-size:10px;color:#fff;transform:scaleX(0.930);transform-origin:0 0">插入</div>
<div class="a" style="left:1116px;top:356.5px;width:51.7px;height:19.2px;background:#6e6e6e;border-radius:3px"></div>
<div class="t" style="left:1122px;top:361px;font-size:10px;color:#f0f0f0;transform:scaleX(0.945);transform-origin:0 0">生成记录</div>


<!-- PROMPT BAR -->
<div class="a" style="left:199.4px;top:628.9px;width:208px;height:20.6px;background:#333;border-radius:10.3px"></div>
<div class="t" style="left:219px;top:634px;font-size:8.6px;color:#e0e0e0;transform:scaleX(0.952);transform-origin:0 0">Deepseek增强</div>
<div class="a" style="left:283.8px;top:633px;width:17.5px;height:10.6px;background:#6a6a6a;border-radius:5.3px"></div>
<div class="a" style="left:284.8px;top:634px;width:8.6px;height:8.6px;background:#fff;border-radius:50%"></div>
<div class="t" style="left:323.2px;top:634px;font-size:8.6px;color:#e0e0e0;transform:scaleX(0.922);transform-origin:0 0">局部修改模式</div>
<div class="a" style="left:379.7px;top:633px;width:17.8px;height:10.6px;background:#6a6a6a;border-radius:5.3px"></div>
<div class="a" style="left:380.7px;top:634px;width:8.6px;height:8.6px;background:#fff;border-radius:50%"></div>
<div class="a" style="left:200.3px;top:652.3px;width:599.5px;height:44.4px;background:#333;border-radius:5px"></div>
<div class="a" style="left:215.4px;top:656.5px;width:544.6px;height:36.5px;background:#222;border-radius:4px"></div>
<div class="a" style="left:217.2px;top:659.6px;width:89.7px;height:30.2px;background:#333;border-radius:4px"></div>
<svg class="a" style="left:0;top:0" width="1267" height="723">
<g fill="#e0e0e0"><circle cx="203.8" cy="667.8" r="1.1"/><circle cx="208.2" cy="667.8" r="1.1"/><circle cx="203.8" cy="672.2" r="1.1"/><circle cx="208.2" cy="672.2" r="1.1"/><circle cx="203.8" cy="676.6" r="1.1"/><circle cx="208.2" cy="676.6" r="1.1"/><circle cx="203.8" cy="681" r="1.1"/><circle cx="208.2" cy="681" r="1.1"/></g>
<g transform="translate(220.7 662.6)">
<rect width="24.4" height="24.2" fill="#5a3a28"/>
<rect x="0" y="0" width="5" height="24.2" fill="#8a6a4a"/>
<rect x="19" y="0" width="5.4" height="24.2" fill="#7a5436"/>
<rect x="1" y="6" width="4" height="1" fill="#c8a070"/><rect x="1" y="12" width="4" height="1" fill="#c8a070"/>
<path d="M4 24.2Q5 17.5 12 17Q19 17.5 20.5 24.2Z" fill="#c8281e"/>
<path d="M10 17.5L12 21L14 17.5Z" fill="#f0e0d0"/>
<ellipse cx="12.2" cy="11.2" rx="4.6" ry="5.4" fill="#e8b494"/>
<path d="M7.2 9.5Q7 4 12.3 4Q17.5 4 17.2 9.5Q15 7.5 12 7.6Q9 7.6 7.2 9.5Z" fill="#16100c"/>
<circle cx="10.3" cy="11" r="1.6" fill="none" stroke="#222" stroke-width="0.7"/><circle cx="14.2" cy="11" r="1.6" fill="none" stroke="#222" stroke-width="0.7"/>
</g>
<path d="M294.8 677.5L298 673.8L301.2 677.5" fill="none" stroke="#e8e8e8" stroke-width="1.3"/>
</svg>
<div class="t" style="left:249.2px;top:669.5px;font-size:9.5px;color:#eaeaea;transform:scaleX(0.960);transform-origin:0 0">皮克斯...</div>
<div class="t" style="left:317.5px;top:669px;font-size:11px;color:#8c8c8c;transform:scaleX(0.981);transform-origin:0 0">输入你想要的画面描述</div>
<div class="a" style="left:679.9px;top:659.4px;width:74.3px;height:30.7px;border-radius:3px;background:linear-gradient(180deg,#f45c5c,#c41e10)"></div>
<div class="a" style="left:702px;top:667.9px;width:4px;height:12.7px;background:#fff"></div>
<div class="a" style="left:707.4px;top:667.9px;width:3.6px;height:12.7px;background:#fff"></div>
<div class="t" style="left:714.7px;top:669.8px;font-size:10px;color:#fff;transform:scaleX(0.965);transform-origin:0 0">暂停</div>
<svg class="a" style="left:0;top:0" width="1267" height="723">
<path d="M777.7 664.8L780.6 666.5L783.8 666.5L784.8 669.6L787.4 671.8L786.3 674.8L787.4 677.8L784.8 680L783.8 683.1L780.6 683.1L777.7 684.8L774.8 683.1L771.6 683.1L770.6 680L768 677.8L769.1 674.8L768 671.8L770.6 669.6L771.6 666.5L774.8 666.5Z" fill="none" stroke="#d8d8d8" stroke-width="1.1" stroke-linejoin="round"/>
<path d="M779 668.5L775 675.5H778.5L776.5 681L780.5 673.5H777Z" fill="none" stroke="#d8d8d8" stroke-width="1" stroke-linejoin="round"/>
</svg>
<!-- canvas handles -->
<svg class="a" style="left:0;top:0" width="1267" height="723">
<g fill="#fff" stroke="#888" stroke-width="0.5">
<circle cx="183" cy="141" r="2.3"/><circle cx="527" cy="141" r="2.3"/><circle cx="871" cy="141" r="2.3"/>
<circle cx="183" cy="392" r="2.3"/><circle cx="871" cy="392" r="2.3"/>
<circle cx="183" cy="643" r="2.3"/><circle cx="527" cy="643" r="2.3"/><circle cx="871" cy="643" r="2.3"/>
</g>
<circle cx="527" cy="128" r="2.7" fill="#d8d8d8"/><circle cx="527" cy="128" r="1.1" fill="#333"/>
</svg>

</body></html>
